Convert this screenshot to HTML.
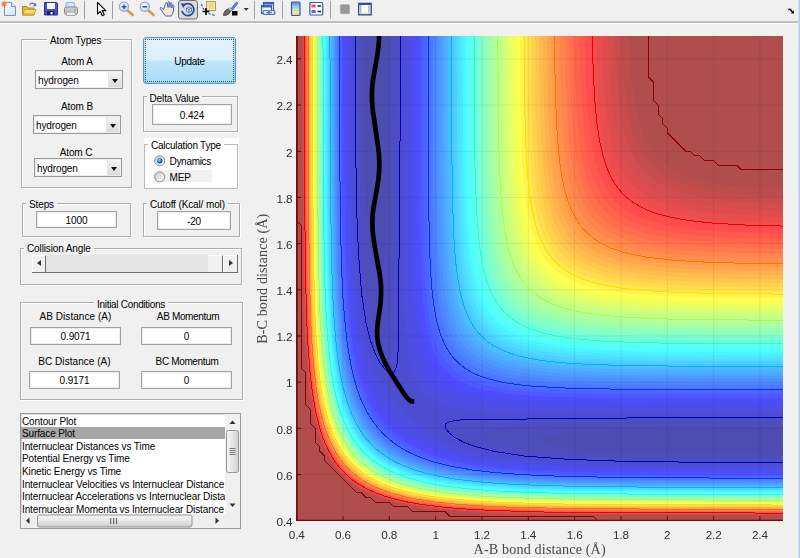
<!DOCTYPE html>
<html><head><meta charset="utf-8"><title>LEPS GUI</title>
<style>
html,body{margin:0;padding:0}
body{width:800px;height:558px;overflow:hidden;background:#f0f0f0;position:relative;font-family:"Liberation Sans",sans-serif;font-size:10px;letter-spacing:-0.12px;color:#000}
.abs,.gb,.ed,.lbl,.dd,.t{position:absolute;box-sizing:border-box}
.plot{position:absolute;left:0;top:0}
.tb{position:absolute;left:0;top:0;width:800px;height:21px;background:#f0f0f0}
.tbl1{position:absolute;left:0;top:21px;width:798px;height:1px;background:#c3c3c3}
.tbl2{position:absolute;left:0;top:22px;width:798px;height:1px;background:#b9b9b9}
.tbl3{position:absolute;left:0;top:23px;width:800px;height:1px;background:#fbfbfb}
.sep{position:absolute;top:1px;width:1px;height:18px;background:#a0a0a0}
.gb{border:1px solid #adadad;box-shadow:1px 1px 0 #fff, inset 1px 1px 0 #fff}
.t{background:#f0f0f0;padding:0 3px;white-space:nowrap;height:13px;line-height:13px}
.lbl{white-space:nowrap;text-align:center;height:13px;line-height:13px}
.ed{padding-top:1px;background:#fff;border:1px solid #a2a2a2;box-shadow:inset 0 0 0 1px #ececec;text-align:center;white-space:nowrap}
.dd{background:#fff;border:1px solid #9a9a9a;box-shadow:inset 0 0 0 1px #ececec;white-space:nowrap;height:19px;width:88px;line-height:20px;padding-left:2px;overflow:hidden}
.dd i{position:absolute;right:1px;top:1px;width:12px;height:15px;background:linear-gradient(#f4f4f4,#dadada);border-left:1px solid #e6e6e6}
.dd i:after{content:"";position:absolute;left:2.5px;top:6.5px;border:3.5px solid transparent;border-top:4px solid #111;border-bottom:0}
</style></head><body>
<svg class="plot" width="800" height="558" viewBox="0 0 800 558">
<defs><clipPath id="cp"><rect x="296" y="36" width="487" height="485"/></clipPath></defs><!-- 296.7 35.8 486.4 484.9 -->
<rect x="296.7" y="35.8" width="486.4" height="484.9" fill="#fff"/>
<g clip-path="url(#cp)" shape-rendering="geometricPrecision">
<rect x="296.7" y="35.8" width="486.4" height="484.9" fill="#4d4db1"/>
<path fill="#4d4dbc" d="M296.6 520.7L783.1 520.8L783.1 454.3L676.6 453.2L634.9 452.3L607.1 451.2L583.9 449.4L558.9 446.8L541.0 442.2L541.0 437.6L551.5 435.4L568.5 433.0L607.1 431.0L676.6 429.3L783.1 428.3L783.2 35.8L389.4 35.8L388.0 160.5L387.0 202.1L385.4 239.0L384.7 249.7L383.7 257.5L380.1 277.1L375.5 277.1L370.8 259.4L368.3 234.4L366.2 208.1L364.3 137.4L363.3 35.8L296.7 35.7L296.6 520.7Z"/>
<path fill="#4d4dc7" d="M296.6 520.7L783.1 520.8L783.1 459.1L648.8 457.9L597.8 456.6L570.0 455.2L529.3 451.4L504.7 446.8L491.0 442.2L484.0 437.6L484.1 433.0L491.3 430.2L495.9 429.0L509.8 427.2L533.0 425.7L570.0 424.3L616.3 423.4L783.1 422.2L783.2 35.8L395.5 35.8L394.3 202.1L393.4 248.2L391.9 285.2L390.4 308.3L388.7 322.1L387.5 326.7L384.7 333.9L380.1 333.9L375.5 327.0L370.8 313.3L366.2 288.8L362.4 248.2L361.0 220.5L359.7 169.7L358.5 35.8L296.7 35.7L296.6 520.7Z"/>
<path fill="#4d4dd2" d="M296.6 520.7L783.1 520.8L783.1 462.6L676.6 462.1L607.1 460.9L565.4 459.2L523.8 456.0L493.6 451.4L475.5 446.8L463.2 442.2L454.6 437.6L448.5 433.0L444.8 428.3L444.6 423.7L449.6 421.2L454.2 420.2L468.1 419.3L653.4 417.7L783.1 417.1L783.2 35.8L400.6 35.8L400.0 165.1L398.4 349.8L397.5 363.7L396.5 368.3L394.0 373.3L389.3 373.0L384.7 369.3L380.1 363.3L375.5 354.7L370.8 342.4L366.2 324.4L361.6 294.3L358.4 252.9L356.6 211.3L355.5 142.0L355.0 35.8L296.7 35.7L296.6 520.7Z"/>
<path fill="#4d4dde" d="M296.6 520.7L783.1 520.8L783.1 465.6L681.2 465.2L607.1 464.0L551.5 461.8L532.6 460.7L514.4 458.8L493.2 456.0L486.6 454.8L471.0 451.4L456.0 446.8L444.8 442.2L436.1 437.6L429.0 433.0L417.5 423.7L407.8 414.5L394.0 400.3L384.7 388.8L380.1 381.7L375.5 373.0L370.8 361.9L366.2 346.9L361.6 324.8L356.9 285.5L355.3 257.5L354.1 229.8L352.5 151.3L351.9 35.8L296.7 35.7L296.6 520.7ZM465.5 409.9L477.4 411.3L491.3 412.2L533.0 413.4L783.1 412.7L783.1 35.7L405.1 35.8L404.3 243.6L404.4 289.8L404.9 312.9L405.8 331.4L407.0 345.2L408.9 359.1L412.1 372.9L415.6 382.2L418.2 386.8L421.5 391.4L426.1 396.0L432.8 400.6L440.3 404.1L449.6 407.0L465.5 409.9Z"/>
<path fill="#4d4de9" d="M296.6 520.7L783.1 520.8L783.1 468.0L662.7 467.4L588.5 466.2L546.8 464.5L523.7 462.8L500.9 460.7L472.7 456.0L454.7 451.4L441.7 446.8L431.5 442.2L423.3 437.6L416.3 433.0L404.8 423.7L394.0 412.9L384.7 401.5L380.1 394.5L375.5 386.3L370.8 376.1L366.2 363.2L361.6 345.2L357.0 317.5L353.4 275.9L352.3 257.6L351.4 229.8L350.1 155.9L349.5 35.8L296.7 35.7L296.6 520.7ZM481.3 405.2L495.9 406.8L509.8 407.7L551.5 408.9L607.1 409.1L783.1 408.6L783.1 35.7L409.1 35.8L408.7 220.5L409.0 275.9L409.6 299.0L410.6 317.5L412.4 336.0L414.6 349.8L418.4 363.7L422.2 372.9L424.8 377.5L428.1 382.2L431.0 385.5L435.7 389.7L440.3 393.0L444.9 395.5L454.2 399.4L468.1 403.1L481.3 405.2Z"/>
<path fill="#4d4df4" d="M296.6 520.7L783.1 520.8L783.1 470.3L671.1 469.9L602.4 468.9L542.2 466.7L519.1 465.3L505.2 463.9L482.0 461.0L472.7 459.3L457.6 456.0L442.2 451.4L430.6 446.8L421.3 442.2L412.5 436.8L401.4 428.3L394.0 421.3L384.7 410.6L380.1 404.1L375.5 396.5L370.8 387.2L366.2 375.6L361.6 360.3L357.4 340.6L356.0 331.4L353.7 312.9L352.0 294.4L350.4 266.7L349.2 234.4L347.7 151.3L347.2 35.8L296.7 35.7L296.6 520.7ZM487.8 400.6L500.5 402.2L519.1 403.5L560.7 404.8L621.0 405.1L783.1 404.8L783.1 35.7L412.9 35.8L412.7 206.7L413.1 266.7L413.8 289.8L414.8 308.3L416.7 326.7L418.9 340.6L422.4 354.4L426.4 364.6L431.1 372.9L435.7 378.7L440.3 383.2L444.9 386.7L449.6 389.5L458.8 393.8L472.7 397.9L487.8 400.6Z"/>
<path fill="#4d4dff" d="M296.6 520.7L783.1 520.8L783.1 472.2L662.7 471.7L583.9 470.6L537.6 468.7L494.2 465.3L463.5 460.4L445.7 456.0L432.1 451.4L421.6 446.8L413.1 442.2L403.2 435.5L394.6 428.3L385.8 419.1L378.9 409.9L375.5 404.6L370.8 396.2L366.2 385.7L361.6 372.2L357.2 354.4L352.3 323.8L348.8 280.6L347.0 234.4L345.8 155.9L345.3 35.8L296.7 35.7L296.6 520.7ZM551.5 400.6L616.3 401.4L783.1 401.2L783.1 35.7L416.5 35.8L416.4 211.3L416.7 248.2L417.6 280.6L418.9 303.6L420.9 322.1L424.3 340.6L428.7 354.4L433.1 363.7L436.0 368.3L440.3 373.7L444.9 378.2L450.1 382.2L458.2 386.8L463.5 389.1L477.4 393.5L495.9 396.9L519.1 399.2L551.5 400.6Z"/>
<path fill="#4d58ff" d="M296.6 520.7L783.1 520.8L783.1 474.1L662.7 473.6L588.5 472.6L533.0 470.6L519.1 469.7L495.9 467.6L476.6 465.3L463.5 462.9L452.3 460.7L435.9 456.0L423.8 451.4L414.2 446.8L406.3 442.2L399.7 437.6L394.0 433.0L384.7 423.7L380.1 418.0L375.5 411.4L371.8 405.2L366.2 394.0L361.6 381.9L356.9 365.5L353.8 349.8L351.6 336.0L347.7 296.9L346.3 271.3L345.2 239.0L343.9 160.5L343.4 35.8L296.7 35.7L296.6 520.7ZM533.3 396.0L560.7 397.1L602.4 397.8L783.1 397.8L783.1 35.7L420.0 35.8L419.9 197.4L420.8 262.1L422.1 289.8L423.6 308.3L426.3 326.7L429.6 340.6L432.8 349.8L434.8 354.4L440.3 363.9L443.7 368.3L448.2 372.9L454.0 377.5L458.8 380.6L463.5 383.0L472.7 386.8L486.6 390.5L505.2 393.6L533.3 396.0Z"/>
<path fill="#4d63ff" d="M296.6 520.7L783.1 520.8L783.1 475.8L667.3 475.4L591.7 474.5L537.6 472.6L495.9 469.8L462.9 465.3L442.3 460.7L427.8 456.0L416.7 451.4L407.8 446.8L398.6 440.8L389.3 433.2L380.4 423.7L373.7 414.5L370.8 409.9L366.2 401.1L361.6 390.0L356.9 375.5L353.1 359.1L350.8 345.2L348.3 326.7L346.6 308.3L345.2 285.2L343.0 226.6L342.2 151.3L341.8 35.8L296.7 35.7L296.6 520.7ZM523.0 391.4L556.1 393.3L597.8 394.3L783.1 394.5L783.1 35.7L423.3 35.8L423.3 188.2L424.3 257.5L425.3 280.6L427.2 303.6L430.0 322.1L433.3 336.0L435.7 343.2L438.4 349.8L440.8 354.4L444.9 360.8L449.6 366.3L454.2 370.7L458.8 374.1L463.5 377.0L472.7 381.4L486.6 385.8L505.2 389.4L523.0 391.4Z"/>
<path fill="#4d6eff" d="M296.6 520.7L783.1 520.8L783.1 477.3L658.0 476.9L579.3 475.8L533.0 474.2L509.8 472.7L486.6 470.6L472.7 468.9L452.0 465.3L431.0 459.7L420.8 456.0L410.6 451.4L402.4 446.8L395.6 442.2L389.3 437.2L380.4 428.3L373.3 419.1L366.2 407.1L361.6 397.0L356.9 383.9L352.8 368.3L350.2 354.4L347.7 338.0L345.6 317.5L343.9 294.4L342.9 275.9L341.9 243.6L340.7 165.1L340.2 35.8L296.7 35.7L296.6 520.7ZM516.0 386.8L528.3 388.1L546.8 389.4L593.2 390.8L653.4 391.2L783.1 391.2L783.1 35.7L426.6 35.8L426.6 183.6L427.5 248.2L428.7 275.9L430.2 294.4L432.6 312.9L435.4 326.7L439.8 340.6L444.9 351.3L450.3 359.1L454.5 363.7L459.8 368.3L468.1 373.7L476.1 377.5L482.0 379.7L495.9 383.5L516.0 386.8Z"/>
<path fill="#4d79ff" d="M296.6 520.7L783.1 520.8L783.1 478.9L662.7 478.5L588.5 477.5L528.3 475.6L510.1 474.5L491.3 472.8L468.1 470.1L458.8 468.5L442.8 465.3L426.6 460.7L414.7 456.0L405.2 451.4L394.0 444.3L385.7 437.6L376.9 428.3L370.8 420.2L366.2 412.5L360.5 400.6L356.9 391.2L352.3 375.1L347.7 351.3L345.7 336.0L343.8 317.5L342.5 299.0L340.2 239.0L339.1 160.5L338.7 35.8L296.7 35.7L296.6 520.7ZM567.1 386.8L597.8 387.6L634.9 388.0L783.1 388.1L783.1 35.7L429.7 35.8L429.9 188.2L430.4 229.8L431.3 257.5L433.0 285.2L435.1 303.6L438.7 322.1L443.0 336.0L444.9 340.7L449.6 349.4L453.1 354.4L457.1 359.1L462.1 363.7L468.1 368.0L472.7 370.7L482.0 374.9L495.9 379.2L514.4 382.7L537.6 385.2L567.1 386.8Z"/>
<path fill="#4d84ff" d="M296.6 520.7L783.1 520.8L783.1 480.2L667.3 479.9L592.0 479.1L537.6 477.5L490.6 474.5L472.7 472.4L455.7 469.9L435.7 465.5L426.4 462.7L420.3 460.7L412.5 457.5L403.2 452.9L393.2 446.8L384.7 440.0L377.6 433.0L370.3 423.7L366.2 417.3L362.2 409.9L356.9 397.5L352.3 383.0L348.9 368.3L346.4 354.4L344.0 336.0L342.2 317.5L340.7 294.4L338.6 234.4L337.7 160.5L337.3 35.8L296.7 35.7L296.6 520.7ZM544.5 382.2L574.6 383.7L616.3 384.6L783.1 385.0L783.1 35.7L432.9 35.8L433.0 179.0L433.5 220.5L434.3 248.2L435.8 275.9L437.7 294.4L440.7 312.9L444.3 326.7L449.6 339.7L452.6 345.2L455.7 349.8L459.5 354.4L464.3 359.1L470.3 363.7L477.4 367.9L482.0 370.0L491.3 373.5L505.2 377.1L523.7 380.2L544.5 382.2Z"/>
<path fill="#4d8fff" d="M296.6 520.7L783.1 520.8L783.1 481.5L653.4 481.1L574.6 480.1L528.3 478.5L505.2 477.1L482.0 475.2L468.1 473.5L449.6 470.5L440.3 468.4L426.4 464.8L414.7 460.7L404.4 456.0L394.0 450.0L389.3 446.8L383.6 442.2L375.5 434.0L370.8 428.4L367.6 423.7L361.6 413.3L356.9 403.1L352.3 389.8L348.0 372.9L345.5 359.1L343.0 342.0L341.1 322.1L339.5 299.0L338.4 277.3L337.5 248.2L336.5 169.7L336.0 35.8L296.7 35.7L296.6 520.7ZM532.3 377.5L546.8 378.9L565.4 380.0L607.1 381.3L667.3 381.8L783.1 381.9L783.1 35.7L435.9 35.8L436.1 174.3L437.2 239.0L438.3 262.1L440.2 285.2L442.9 303.6L445.9 317.5L450.6 331.4L455.2 340.6L458.8 346.1L463.5 351.6L468.1 356.1L472.7 359.7L482.0 365.1L489.3 368.3L495.9 370.6L505.2 373.1L514.4 375.0L532.3 377.5Z"/>
<path fill="#4d9bff" d="M296.6 520.7L783.1 520.8L783.1 482.8L658.0 482.4L579.3 481.5L519.1 479.5L482.0 476.6L464.1 474.5L449.6 472.1L438.8 469.9L421.9 465.3L409.6 460.7L400.0 456.0L389.3 449.4L380.4 442.2L371.7 433.0L366.2 425.4L361.6 417.7L355.8 405.2L352.3 395.9L347.7 379.1L343.1 354.4L341.4 340.6L338.3 303.6L336.2 243.6L335.1 165.1L334.7 35.8L296.7 35.7L296.6 520.7ZM583.6 377.5L648.8 378.7L783.1 378.9L783.1 35.7L439.0 35.8L439.2 179.0L439.8 215.9L440.9 248.2L442.8 275.9L445.1 294.4L448.8 312.9L453.4 326.7L457.8 336.0L460.6 340.6L464.0 345.2L468.1 349.7L472.7 353.9L477.4 357.3L482.0 360.1L491.3 364.5L500.5 367.8L509.8 370.2L528.3 373.5L551.5 375.9L583.6 377.5Z"/>
<path fill="#4da6ff" d="M296.6 520.7L783.1 520.8L783.1 484.0L662.7 483.7L583.9 482.8L528.3 481.2L505.2 479.9L486.6 478.5L463.5 475.8L449.6 473.7L431.9 469.9L417.1 465.5L405.1 460.7L396.1 456.0L388.7 451.4L380.1 444.6L373.0 437.6L365.8 428.3L361.6 421.6L357.8 414.5L352.3 401.2L347.7 385.9L344.8 372.9L343.0 363.6L340.0 340.6L338.4 324.3L336.8 299.0L334.8 239.0L333.8 160.5L333.5 35.8L296.7 35.7L296.6 520.7ZM556.8 372.9L588.5 374.5L630.2 375.4L783.1 375.9L783.1 35.7L442.0 35.8L442.2 169.7L442.7 206.7L443.7 239.0L445.4 266.7L447.3 285.2L450.5 303.6L454.3 317.5L458.0 326.7L460.3 331.4L466.2 340.6L470.1 345.2L475.0 349.8L481.2 354.4L486.6 357.6L491.3 359.9L500.5 363.5L514.4 367.3L533.0 370.5L556.8 372.9Z"/>
<path fill="#4db1ff" d="M296.6 520.7L783.1 520.8L783.1 485.1L648.8 484.7L570.0 483.8L519.1 482.0L479.2 479.1L463.5 477.2L445.9 474.5L426.4 470.1L417.1 467.2L407.9 463.7L398.6 459.5L389.3 454.1L379.6 446.8L370.8 438.0L363.5 428.3L356.9 416.8L352.3 406.1L347.7 392.0L343.2 372.9L341.0 359.1L338.6 340.6L335.6 299.0L333.7 248.2L332.8 169.7L332.4 35.8L296.7 35.7L296.6 520.7ZM543.1 368.3L574.6 370.8L616.3 372.2L676.6 372.8L783.1 372.9L783.1 35.7L445.0 35.8L445.2 165.1L446.5 229.8L447.6 252.9L449.7 275.9L452.4 294.4L455.6 308.3L460.5 322.1L465.3 331.4L468.3 336.0L472.7 341.4L477.4 345.9L482.3 349.8L491.3 355.2L500.0 359.1L505.2 360.9L514.4 363.5L523.7 365.5L543.1 368.3Z"/>
<path fill="#4dbcff" d="M296.6 520.7L783.1 520.8L783.1 486.2L653.4 485.9L574.6 485.0L523.7 483.4L500.5 482.1L477.4 480.2L458.8 477.9L440.3 474.8L426.4 471.5L417.1 468.8L407.2 465.3L397.1 460.7L389.0 456.0L382.5 451.4L376.9 446.8L368.1 437.6L361.6 428.6L356.9 420.6L352.3 410.5L347.7 397.4L343.7 382.2L341.1 368.3L338.3 349.8L336.1 326.7L334.6 303.6L332.7 252.9L331.7 169.7L331.3 35.8L296.7 35.7L296.6 520.7ZM589.5 368.3L653.4 369.6L783.1 370.0L783.1 35.7L447.9 35.8L448.3 169.7L448.9 206.7L450.0 239.0L452.1 266.7L454.4 285.2L458.3 303.6L463.0 317.5L467.5 326.7L470.4 331.4L477.4 339.8L482.0 344.0L486.6 347.5L491.3 350.4L500.5 354.9L514.4 359.6L523.7 361.8L534.5 363.7L560.7 366.6L589.5 368.3Z"/>
<path fill="#4dc7ff" d="M296.6 520.7L783.1 520.8L783.1 487.3L653.4 486.9L574.6 486.0L514.4 484.1L477.4 481.4L457.7 479.1L444.9 477.0L432.2 474.5L415.4 469.9L403.1 465.3L393.6 460.7L384.7 455.2L379.6 451.4L374.3 446.8L366.2 438.0L359.4 428.3L356.7 423.7L352.3 414.6L348.7 405.2L345.8 396.0L342.3 382.2L338.4 360.2L336.6 345.2L333.6 308.3L331.6 248.2L330.6 169.7L330.2 35.8L296.7 35.7L296.6 520.7ZM564.6 363.7L593.2 365.3L634.9 366.4L690.5 366.9L783.1 367.0L783.1 35.7L450.9 35.8L451.2 165.1L451.8 202.1L452.7 229.8L454.2 253.7L456.6 275.9L459.9 294.4L463.8 308.3L467.5 317.5L469.8 322.1L475.8 331.4L479.8 336.0L484.7 340.6L491.0 345.2L495.9 348.1L500.5 350.4L509.8 354.1L523.7 358.0L542.2 361.3L564.6 363.7Z"/>
<path fill="#4dd2ff" d="M296.6 520.7L783.1 520.8L783.1 488.4L653.4 488.0L574.6 487.1L519.1 485.4L491.3 483.8L477.4 482.6L454.2 479.8L440.3 477.5L426.4 474.5L410.9 469.9L399.4 465.3L390.4 460.7L380.1 453.8L371.9 446.8L363.8 437.6L357.5 428.3L352.3 418.3L347.7 406.8L343.0 391.4L340.1 377.5L337.7 363.7L335.4 345.2L333.8 327.6L332.3 303.6L330.4 243.6L329.5 165.1L329.1 35.8L296.7 35.7L296.6 520.7ZM655.5 363.7L783.1 364.1L783.2 35.8L453.8 35.8L454.4 179.0L455.3 215.9L457.0 248.2L459.4 271.3L461.6 285.2L463.5 293.5L468.1 308.6L472.1 317.5L474.7 322.1L477.8 326.7L481.5 331.4L486.1 336.0L491.3 340.2L495.9 343.3L500.5 345.9L509.8 350.0L519.1 353.0L528.3 355.3L537.6 357.1L551.2 359.1L574.6 361.2L607.1 362.7L655.5 363.7Z"/>
<path fill="#4ddeff" d="M296.6 520.7L783.1 520.8L783.1 489.3L653.4 489.0L579.3 488.3L523.7 486.7L500.5 485.5L477.2 483.8L458.8 481.6L440.3 478.8L421.3 474.5L407.9 470.3L395.9 465.3L387.4 460.7L380.1 455.9L370.8 448.0L366.2 443.1L361.7 437.6L356.9 430.3L352.3 421.8L347.3 409.9L343.0 396.5L338.7 377.5L335.9 359.1L333.8 340.7L332.0 317.5L330.8 294.4L329.2 239.0L328.5 165.1L328.2 35.8L296.7 35.7L296.6 520.7ZM592.4 359.1L621.0 360.1L658.0 360.7L783.1 361.1L783.1 35.7L456.8 35.8L457.2 165.1L457.9 202.1L459.3 234.4L461.1 257.5L463.6 275.9L467.5 294.4L472.3 308.3L476.8 317.5L479.8 322.1L483.3 326.7L487.5 331.4L495.9 338.2L500.5 341.1L509.8 345.7L523.7 350.4L542.2 354.4L565.4 357.2L592.4 359.1Z"/>
<path fill="#4de9ff" d="M296.6 520.7L783.1 520.8L783.1 490.2L644.1 489.9L565.4 489.0L514.4 487.3L491.3 485.9L468.1 483.9L449.6 481.5L435.6 479.1L417.1 474.7L407.9 471.7L403.0 469.9L394.0 465.9L384.7 460.8L377.9 456.0L370.8 450.1L363.5 442.2L356.9 433.2L352.3 425.0L347.6 414.5L343.0 401.2L338.4 382.2L333.8 351.4L332.0 331.4L330.5 308.3L328.6 257.5L327.6 174.3L327.2 35.8L296.7 35.7L296.6 520.7ZM570.8 354.4L602.4 356.4L639.5 357.5L695.1 358.0L783.1 358.2L783.1 35.7L459.7 35.8L460.2 160.5L460.9 197.4L461.9 225.1L463.5 248.2L465.6 266.7L469.0 285.2L473.0 299.0L476.7 308.3L479.0 312.9L485.1 322.1L489.1 326.7L494.0 331.4L500.2 336.0L505.2 338.9L509.8 341.3L519.1 345.0L533.0 348.9L551.5 352.3L570.8 354.4Z"/>
<path fill="#4df4ff" d="M296.6 520.7L783.1 520.8L783.1 491.2L648.8 490.8L570.0 490.0L515.1 488.4L472.7 485.4L457.4 483.8L440.3 481.1L429.9 479.1L412.2 474.5L399.5 469.9L389.3 465.1L380.1 459.4L375.4 456.0L370.1 451.4L361.6 442.2L356.9 435.8L352.3 428.0L346.2 414.5L342.9 405.2L338.4 387.9L334.9 368.3L332.6 349.8L330.6 326.7L329.2 303.6L327.6 252.9L326.7 174.3L326.3 35.8L296.7 35.7L296.6 520.7ZM639.2 354.4L695.1 355.1L783.1 355.3L783.2 35.8L462.6 35.8L463.2 165.1L464.1 202.1L465.7 234.4L468.1 259.6L471.7 280.6L475.5 294.4L479.0 303.6L482.0 309.6L486.6 317.0L490.7 322.1L495.3 326.7L500.5 331.0L508.4 336.0L514.4 338.9L528.3 343.9L537.6 346.3L546.8 348.1L570.0 351.1L597.8 353.1L639.2 354.4Z"/>
<path fill="#4dffff" d="M296.6 520.7L783.1 520.8L783.1 492.1L648.8 491.8L570.0 490.9L509.8 489.0L472.7 486.4L449.6 483.8L435.7 481.4L424.7 479.1L408.2 474.5L396.2 469.9L386.9 465.3L380.1 461.1L375.5 457.8L368.0 451.4L359.8 442.2L353.6 433.0L347.7 421.5L343.1 409.9L338.4 393.1L336.1 382.2L333.8 368.4L331.6 349.8L328.7 312.9L326.7 252.9L325.8 174.3L325.4 35.8L296.7 35.7L296.6 520.7ZM595.8 349.8L625.6 351.1L662.7 351.8L783.1 352.3L783.1 35.7L465.6 35.8L466.2 160.5L467.0 197.4L468.3 225.1L470.1 248.2L472.7 267.4L476.6 285.2L481.4 299.0L486.0 308.3L488.9 312.9L495.9 321.3L500.5 325.6L505.2 329.1L509.8 332.0L517.7 336.0L523.7 338.4L533.0 341.3L550.8 345.2L570.0 347.8L595.8 349.8Z"/>
<path fill="#58fff4" d="M296.6 520.7L783.1 520.8L783.1 493.0L653.4 492.7L574.6 491.9L514.4 490.1L491.3 488.9L472.7 487.4L449.6 484.8L435.7 482.5L419.9 479.1L404.5 474.5L393.1 469.9L384.2 465.3L375.5 459.5L366.2 451.6L358.1 442.2L352.3 433.5L347.7 424.6L343.0 413.2L338.4 397.9L335.0 382.2L332.8 368.3L330.1 345.2L328.6 326.7L327.3 303.6L325.6 243.6L324.8 165.1L324.5 35.8L296.7 35.7L296.6 520.7ZM577.2 345.2L607.1 347.3L644.1 348.5L699.7 349.2L783.1 349.4L783.1 35.7L468.6 35.8L469.1 151.3L469.8 188.2L470.9 215.9L472.5 239.0L474.7 257.5L478.1 275.9L482.1 289.8L485.8 299.0L488.2 303.6L494.2 312.9L498.2 317.5L503.1 322.1L509.3 326.7L514.4 329.8L519.1 332.2L528.3 335.9L542.2 339.9L556.1 342.6L577.2 345.2Z"/>
<path fill="#63ffe9" d="M296.6 520.7L783.1 520.8L783.1 493.8L653.4 493.5L574.6 492.8L519.1 491.2L495.9 490.1L472.0 488.4L454.2 486.4L435.7 483.6L417.1 479.5L403.2 475.3L390.2 469.9L381.7 465.3L374.8 460.7L366.2 453.4L360.0 446.8L356.4 442.2L352.3 436.0L347.7 427.5L342.3 414.5L338.0 400.6L333.9 382.2L331.2 363.7L329.1 345.9L327.4 322.1L326.2 299.0L324.7 243.6L323.9 165.1L323.7 35.8L296.7 35.7L296.6 520.7ZM635.4 345.2L690.5 346.1L783.1 346.4L783.2 35.8L471.5 35.8L472.2 160.5L473.2 197.4L474.7 225.1L477.4 252.0L480.8 271.3L484.6 285.2L486.6 290.7L490.4 299.0L496.1 308.3L500.5 313.6L505.2 318.2L510.1 322.1L517.5 326.7L523.7 329.8L533.0 333.4L542.2 336.1L551.5 338.2L574.6 341.6L602.4 343.9L635.4 345.2Z"/>
<path fill="#6effde" d="M296.6 520.7L783.1 520.8L783.1 494.6L644.1 494.3L565.4 493.5L509.8 491.7L468.1 488.9L449.6 486.7L431.0 483.8L417.1 480.6L407.9 478.0L397.8 474.5L384.7 468.4L375.5 462.7L366.2 455.2L358.4 446.8L352.3 438.3L347.7 430.2L342.7 419.1L338.1 405.2L333.8 386.9L331.4 372.9L329.1 355.3L327.4 336.0L326.0 312.9L324.1 257.5L323.2 174.3L322.9 35.8L296.7 35.7L296.6 520.7ZM601.3 340.6L630.2 342.0L667.3 342.8L783.1 343.4L783.1 35.7L474.5 35.8L475.1 151.3L476.0 188.2L477.3 215.9L479.2 239.0L482.0 259.1L485.8 275.9L490.6 289.8L495.2 299.0L498.1 303.6L505.2 312.2L509.8 316.4L514.4 319.9L519.1 322.8L526.8 326.7L539.3 331.4L556.1 335.4L574.6 338.2L601.3 340.6Z"/>
<path fill="#79ffd2" d="M296.6 520.7L783.1 520.8L783.1 495.4L644.1 495.1L565.4 494.3L514.4 492.9L491.3 491.6L468.1 489.8L454.2 488.3L435.7 485.6L425.8 483.8L407.7 479.1L394.8 474.5L384.7 469.8L375.5 464.2L370.6 460.7L365.3 456.0L356.9 447.0L352.3 440.6L347.7 432.8L341.6 419.1L338.3 409.9L333.8 392.0L330.5 372.9L328.2 354.4L326.2 331.4L324.9 308.3L323.3 257.5L322.4 174.3L322.1 35.8L296.7 35.7L296.6 520.7ZM584.9 336.0L616.3 338.2L653.4 339.5L704.3 340.1L783.1 340.4L783.1 35.7L477.6 35.8L478.1 146.6L478.8 179.0L480.0 206.7L481.6 229.8L483.8 248.2L487.3 266.7L491.3 280.6L495.1 289.8L497.4 294.4L503.5 303.6L507.5 308.3L512.4 312.9L518.5 317.5L523.7 320.6L528.3 323.0L537.6 326.7L551.5 330.7L565.4 333.4L584.9 336.0Z"/>
<path fill="#84ffc7" d="M296.6 520.7L783.1 520.8L783.1 496.2L644.1 495.9L565.4 495.0L505.2 493.3L468.1 490.6L447.3 488.4L431.0 485.7L421.2 483.8L404.3 479.1L392.0 474.5L382.5 469.9L374.9 465.3L368.7 460.7L363.5 456.0L355.3 446.8L349.1 437.6L343.0 425.7L338.7 414.5L333.8 396.6L331.8 386.8L329.1 370.5L327.3 354.4L324.5 317.5L322.5 257.5L321.6 174.3L321.3 35.8L296.7 35.7L296.6 520.7ZM639.1 336.0L695.1 337.0L783.1 337.4L783.2 35.8L480.6 35.8L481.3 151.3L482.3 188.2L483.8 215.9L486.6 243.3L490.0 262.1L493.9 275.9L495.9 281.5L499.7 289.8L505.4 299.0L509.8 304.3L514.4 308.9L519.5 312.9L526.8 317.5L533.0 320.5L542.2 324.1L551.5 326.9L560.7 329.0L579.3 331.9L607.1 334.5L639.1 336.0Z"/>
<path fill="#8fffbc" d="M296.6 520.7L783.1 520.8L783.1 497.0L648.8 496.7L570.0 495.9L509.8 494.2L486.0 493.0L468.1 491.5L444.9 488.9L431.0 486.6L417.0 483.8L401.0 479.1L389.2 474.5L380.1 469.9L370.8 463.8L361.8 456.0L353.8 446.8L347.7 437.6L343.0 428.4L338.4 416.7L333.8 400.8L330.9 386.8L328.6 372.9L326.4 354.4L324.5 332.0L323.5 312.9L321.6 252.9L320.8 174.3L320.5 35.8L296.7 35.7L296.6 520.7ZM609.6 331.4L634.9 332.6L671.9 333.6L783.1 334.3L783.1 35.7L483.7 35.8L484.4 146.6L485.2 179.0L486.5 206.7L488.4 229.8L491.3 249.8L495.1 266.7L499.9 280.6L505.2 290.8L509.8 297.5L514.4 302.7L519.1 307.0L523.7 310.5L528.3 313.5L536.2 317.5L548.8 322.1L565.4 326.2L583.9 329.0L609.6 331.4Z"/>
<path fill="#9bffb1" d="M296.6 520.7L783.1 520.8L783.1 497.8L653.4 497.5L570.0 496.7L509.8 495.0L468.1 492.4L449.6 490.4L431.0 487.6L413.0 483.8L398.6 479.4L386.7 474.5L378.0 469.9L370.8 465.2L361.6 457.4L356.9 452.5L352.3 446.8L347.7 439.7L343.0 430.9L338.2 419.1L333.8 404.7L329.9 386.8L327.7 372.9L325.6 354.4L324.0 336.0L322.7 312.9L320.8 252.9L320.0 169.7L319.7 35.8L296.7 35.7L296.6 520.7ZM594.5 326.7L621.0 328.7L658.0 330.2L709.0 330.9L783.1 331.2L783.1 35.7L486.8 35.8L487.4 142.0L488.2 174.3L489.5 202.1L491.4 225.1L493.9 243.6L496.6 257.5L500.7 271.3L504.5 280.6L506.9 285.2L513.0 294.4L517.0 299.0L522.0 303.6L528.2 308.3L533.0 311.1L537.6 313.5L546.8 317.3L560.7 321.4L574.6 324.1L594.5 326.7Z"/>
<path fill="#a6ffa6" d="M296.6 520.7L783.1 520.8L783.1 498.5L648.8 498.2L570.0 497.5L509.8 495.8L465.4 493.0L444.9 490.6L430.1 488.4L412.5 484.5L398.6 480.4L384.7 474.7L375.9 469.9L369.1 465.3L361.6 458.9L354.6 451.4L347.9 442.2L343.0 433.4L338.4 422.7L333.8 408.4L329.9 391.4L326.9 372.9L324.7 354.4L322.9 331.4L321.7 308.3L320.0 248.2L319.3 169.7L319.0 35.8L296.7 35.7L296.6 520.7ZM650.3 326.7L704.3 327.7L783.1 328.1L783.2 35.8L489.9 35.8L490.2 105.1L490.8 151.3L491.8 183.6L493.6 211.3L496.1 234.4L499.5 252.9L503.4 266.7L507.0 275.9L509.8 281.5L514.4 288.9L518.9 294.4L523.5 299.0L528.3 303.0L537.6 308.8L546.6 312.9L551.5 314.7L560.7 317.4L570.0 319.5L588.5 322.5L616.3 325.1L650.3 326.7Z"/>
<path fill="#b1ff9b" d="M296.7 520.7L783.1 520.7L783.1 499.2L644.1 498.9L560.7 498.0L505.2 496.3L463.5 493.6L444.9 491.5L426.4 488.6L412.5 485.5L403.2 482.9L392.3 479.1L380.1 473.5L370.8 467.8L361.6 460.5L356.9 455.9L349.7 446.8L344.1 437.6L339.6 428.3L336.1 419.1L333.2 409.9L329.1 392.4L327.4 382.2L324.5 360.6L322.8 340.6L321.1 312.9L319.9 278.6L318.7 192.8L318.3 35.8L296.7 35.8L296.7 520.7ZM621.7 322.1L648.8 323.4L681.2 324.2L783.1 325.0L783.1 35.8L493.0 35.8L493.9 142.0L494.8 174.3L496.3 202.1L498.5 225.1L501.4 243.6L505.2 259.1L509.8 271.8L514.3 280.6L517.3 285.2L520.9 289.8L525.2 294.4L533.0 300.8L537.6 303.8L546.4 308.3L560.7 313.4L579.2 317.5L597.8 320.1L621.7 322.1Z"/>
<path fill="#bcff8f" d="M296.7 520.7L783.1 520.7L783.1 499.8L644.1 499.5L560.7 498.7L509.8 497.3L486.6 496.1L463.5 494.3L444.9 492.3L426.4 489.4L417.1 487.5L402.7 483.8L389.7 479.1L379.8 474.5L370.8 469.1L365.5 465.3L360.2 460.7L352.3 452.1L347.7 445.7L343.0 437.9L338.4 428.0L333.8 415.0L331.1 405.2L329.0 396.0L325.8 377.5L323.6 359.1L321.4 331.4L319.9 303.6L319.1 275.9L318.0 188.2L317.6 35.8L296.7 35.8L296.7 520.7ZM607.0 317.5L634.9 319.5L671.9 320.8L718.2 321.5L783.1 321.8L783.1 35.8L496.2 35.8L497.0 137.4L497.9 169.7L499.4 197.4L501.5 220.5L504.3 239.0L507.5 252.9L512.3 266.7L516.8 275.9L519.6 280.6L523.7 286.0L527.1 289.8L532.1 294.4L537.6 298.5L542.2 301.3L546.8 303.7L556.1 307.6L570.0 311.7L588.5 315.3L607.0 317.5Z"/>
<path fill="#c7ff84" d="M296.7 520.7L783.1 520.7L783.1 500.5L644.1 500.2L560.7 499.4L500.5 497.7L463.5 495.1L443.8 493.0L426.4 490.2L416.9 488.4L399.7 483.8L387.3 479.1L377.7 474.5L370.8 470.4L366.2 467.0L358.7 460.7L352.3 453.7L347.2 446.8L343.0 439.9L337.5 428.3L333.8 418.0L330.2 405.2L327.3 391.4L325.0 377.5L322.4 354.4L320.6 331.4L319.4 308.3L318.4 275.9L317.3 188.2L316.9 35.8L296.7 35.8L296.7 520.7ZM672.4 317.5L718.2 318.2L783.1 318.5L783.1 35.8L499.5 35.8L499.8 100.5L500.5 146.6L501.7 179.0L503.7 206.7L506.6 229.8L510.4 248.2L515.0 262.1L519.1 270.9L522.0 275.9L525.2 280.6L529.1 285.2L533.8 289.8L542.2 296.1L547.3 299.0L556.1 303.1L570.0 307.6L588.5 311.5L611.7 314.4L639.5 316.3L672.4 317.5Z"/>
<path fill="#d2ff79" d="M296.7 520.7L783.1 520.7L783.1 501.2L644.1 500.9L565.4 500.2L505.2 498.5L486.3 497.6L463.5 495.8L440.3 493.3L426.4 491.0L412.5 488.2L396.9 483.8L384.9 479.1L375.5 474.4L366.2 468.3L357.2 460.7L352.3 455.3L346.0 446.8L340.7 437.6L336.6 428.3L333.2 419.1L329.3 405.2L324.5 379.7L322.1 359.1L319.9 331.7L317.7 275.9L316.6 188.2L316.2 35.8L296.7 35.8L296.7 520.7ZM639.8 312.9L695.1 314.6L783.1 315.3L783.1 35.8L502.8 35.8L503.7 137.4L504.7 169.7L506.4 197.4L509.0 220.5L512.3 239.0L516.1 252.9L519.1 260.6L521.9 266.7L524.5 271.3L528.3 276.9L533.0 282.4L537.6 286.9L542.2 290.5L548.3 294.4L556.1 298.4L560.7 300.3L574.6 304.6L593.2 308.4L616.3 311.2L639.8 312.9Z"/>
<path fill="#deff6e" d="M296.7 520.7L783.1 520.7L783.1 501.9L644.1 501.6L565.4 500.9L505.2 499.2L482.0 498.0L463.5 496.6L440.3 494.0L426.4 491.9L409.7 488.4L394.1 483.8L382.7 479.1L373.8 474.5L366.2 469.6L356.9 461.7L352.3 456.8L347.7 451.0L342.1 442.2L337.5 433.0L333.8 423.6L329.1 408.0L326.5 396.0L324.1 382.2L321.8 363.7L319.7 340.6L318.3 312.9L317.1 275.9L315.9 188.2L315.5 35.8L296.7 35.8L296.7 520.7ZM624.1 308.3L648.8 309.8L681.2 311.0L722.9 311.6L783.1 312.0L783.1 35.8L506.1 35.8L507.0 132.8L508.0 165.1L509.3 188.2L511.5 211.3L514.4 229.8L517.7 243.6L522.5 257.5L528.3 268.6L533.0 275.2L537.6 280.4L542.2 284.6L546.8 288.0L556.1 293.4L570.0 299.0L583.9 302.7L602.4 305.9L624.1 308.3Z"/>
<path fill="#e9ff63" d="M296.7 520.7L783.1 520.7L783.1 502.6L639.5 502.3L565.4 501.5L505.2 499.9L463.5 497.3L444.9 495.3L428.2 493.0L407.9 488.7L398.6 486.1L384.7 481.0L375.5 476.5L365.0 469.9L356.9 463.1L350.4 456.0L343.7 446.8L338.6 437.6L334.6 428.3L328.8 409.9L325.7 396.0L323.4 382.2L320.6 359.1L319.1 340.6L317.6 312.9L316.4 275.9L315.2 188.2L314.9 35.8L296.7 35.8L296.7 520.7ZM726.6 308.3L783.1 308.6L783.1 35.8L509.5 35.8L509.8 95.8L510.7 142.0L512.0 174.3L514.4 203.7L517.6 225.1L519.6 234.4L522.1 243.6L525.4 252.9L528.3 259.2L532.7 266.7L536.0 271.3L540.0 275.9L546.8 282.1L551.5 285.5L559.1 289.8L565.4 292.7L574.6 296.0L583.9 298.5L593.2 300.5L616.3 303.8L644.1 306.0L681.2 307.5L726.6 308.3Z"/>
<path fill="#f4ff58" d="M296.7 520.7L783.1 520.7L783.1 503.2L644.1 502.9L565.4 502.2L505.2 500.6L482.0 499.4L458.8 497.6L440.3 495.5L423.8 493.0L403.3 488.4L394.0 485.4L380.1 479.9L370.8 474.9L363.5 469.9L356.9 464.4L349.2 456.0L343.0 447.4L338.4 439.1L333.8 428.6L330.6 419.1L328.0 409.9L324.5 394.0L322.6 382.2L319.9 359.4L318.4 340.6L316.9 312.9L315.7 275.9L314.7 192.8L314.3 35.8L296.7 35.8L296.7 520.7ZM670.2 303.6L718.2 304.7L783.1 305.2L783.1 35.8L512.9 35.8L513.3 95.8L514.1 137.4L515.4 169.7L517.1 192.8L519.3 211.3L522.7 229.8L526.7 243.6L530.4 252.9L533.0 257.9L537.6 265.3L542.2 271.1L546.8 275.8L551.5 279.6L560.7 285.4L570.0 289.7L574.6 291.4L583.9 294.2L593.2 296.4L611.7 299.4L639.5 302.1L670.2 303.6Z"/>
<path fill="#ffff4d" d="M296.7 520.7L783.1 520.7L783.1 503.8L639.5 503.5L556.1 502.7L500.5 501.0L458.8 498.3L440.3 496.2L421.8 493.4L407.9 490.3L398.6 487.8L386.8 483.8L375.5 478.6L366.2 473.0L361.6 469.6L356.5 465.3L347.9 456.0L343.0 449.1L338.4 441.1L333.8 430.9L329.1 417.3L326.1 405.2L324.1 396.0L321.3 377.5L319.2 359.1L317.4 336.0L316.0 308.3L315.1 280.6L314.1 192.8L313.7 35.8L296.7 35.8L296.7 520.7ZM649.3 299.0L699.7 300.9L783.1 301.7L783.1 35.8L516.4 35.8L516.8 91.2L517.5 132.8L518.8 165.1L520.5 188.2L522.6 206.7L526.0 225.1L529.9 239.0L533.0 247.2L535.7 252.9L538.2 257.5L542.2 263.3L549.4 271.3L554.9 275.9L560.7 279.9L571.1 285.2L584.1 289.8L602.4 294.0L625.6 297.1L649.3 299.0Z"/>
<path fill="#fff44d" d="M296.7 520.7L783.1 520.7L783.1 504.4L639.5 504.1L556.1 503.3L505.2 501.9L482.0 500.7L458.8 498.9L440.3 497.0L421.8 494.1L412.5 492.2L397.6 488.4L384.7 483.8L374.7 479.1L366.2 474.1L360.5 469.9L355.2 465.3L347.7 457.1L343.0 450.8L338.4 443.0L333.7 433.0L329.1 420.1L325.3 405.2L322.6 391.4L320.5 377.5L318.5 359.1L316.5 331.4L315.2 304.8L314.5 275.9L313.4 188.2L313.1 35.8L296.7 35.8L296.7 520.7ZM637.9 294.4L662.7 296.0L695.1 297.1L783.1 298.1L783.1 35.8L519.9 35.8L520.9 123.5L522.1 155.9L523.6 179.0L525.4 197.4L528.3 215.9L530.4 225.1L533.0 234.0L537.6 245.9L541.2 252.9L544.1 257.5L547.6 262.1L551.5 266.3L556.1 270.5L560.7 274.0L570.0 279.5L583.9 285.1L597.8 288.8L616.3 292.0L637.9 294.4Z"/>
<path fill="#ffe94d" d="M296.7 520.7L783.1 520.7L783.1 505.0L639.5 504.7L556.1 503.9L497.8 502.2L458.8 499.6L439.7 497.6L421.8 494.8L412.4 493.0L395.0 488.4L382.5 483.8L372.9 479.1L366.2 475.1L361.6 471.8L353.9 465.3L347.7 458.5L342.4 451.4L337.1 442.2L332.8 433.0L329.1 422.7L324.5 405.4L319.9 378.1L317.5 354.4L315.8 331.4L313.9 275.9L312.8 188.2L312.5 35.8L296.7 35.8L296.7 520.7ZM759.9 294.4L783.1 294.5L783.1 35.8L523.6 35.8L524.1 95.8L525.1 137.4L526.8 169.7L529.5 197.4L533.0 216.9L535.0 225.1L538.0 234.4L541.8 243.6L544.3 248.2L550.5 257.5L554.6 262.1L559.5 266.7L565.4 271.1L573.9 275.9L579.3 278.4L588.5 281.7L597.8 284.3L616.3 287.9L639.5 290.6L671.9 292.7L709.0 293.8L759.9 294.4Z"/>
<path fill="#ffde4d" d="M296.7 520.7L783.1 520.7L783.1 505.6L644.1 505.3L560.7 504.5L500.5 502.9L482.0 502.0L458.8 500.3L435.7 497.7L421.8 495.5L407.9 492.7L392.5 488.4L380.4 483.8L370.8 479.0L361.6 472.9L352.6 465.3L347.7 459.9L341.4 451.4L336.1 442.2L332.0 433.0L328.6 423.7L324.5 408.6L319.7 382.2L317.2 359.1L315.4 336.0L313.4 280.6L312.3 192.8L311.9 35.8L296.7 35.8L296.7 520.7ZM698.7 289.8L783.1 290.8L783.1 35.8L527.3 35.8L527.7 91.2L528.7 132.8L530.4 165.1L532.5 188.2L535.3 206.7L537.3 215.9L539.8 225.1L542.2 232.1L545.1 239.0L547.5 243.6L551.5 250.1L556.1 256.0L560.7 260.8L565.4 264.7L570.0 268.0L575.8 271.3L583.9 275.1L597.8 279.7L616.3 283.6L639.5 286.6L667.3 288.6L698.7 289.8Z"/>
<path fill="#ffd24d" d="M296.7 520.7L783.1 520.7L783.1 506.2L644.1 505.9L560.7 505.1L500.5 503.5L475.3 502.2L458.8 500.9L435.7 498.4L421.8 496.2L406.0 493.0L390.1 488.4L378.5 483.8L369.5 479.1L361.6 474.0L352.3 466.2L347.1 460.7L340.4 451.4L335.2 442.2L331.2 433.0L327.9 423.7L324.5 411.7L321.3 396.0L319.1 382.2L317.0 363.7L315.1 340.6L313.8 312.9L312.8 280.6L311.7 192.8L311.3 35.8L296.7 35.8L296.7 520.7ZM677.7 285.2L722.9 286.5L783.1 287.1L783.1 35.8L531.0 35.8L531.5 86.6L532.3 123.5L533.5 151.3L535.2 174.3L537.6 194.0L540.9 211.3L544.8 225.1L548.5 234.4L551.5 240.3L556.1 247.5L560.4 252.9L565.0 257.5L570.0 261.6L579.3 267.4L587.7 271.3L593.2 273.3L607.1 277.3L625.6 280.7L648.8 283.3L677.7 285.2Z"/>
<path fill="#ffc74d" d="M296.7 520.7L783.1 520.7L783.1 506.8L644.1 506.5L560.7 505.7L500.5 504.1L458.8 501.6L440.3 499.6L421.8 496.9L403.2 493.1L389.3 488.9L376.6 483.8L367.8 479.1L360.8 474.5L352.3 467.4L346.1 460.7L339.4 451.4L334.3 442.2L330.3 433.0L324.4 414.5L320.5 396.0L318.4 382.2L315.9 359.1L314.5 340.6L313.2 312.9L312.1 275.9L311.0 188.2L310.7 35.8L296.7 35.8L296.7 520.7ZM666.7 280.6L713.6 282.4L783.1 283.3L783.1 35.8L534.9 35.8L535.3 82.0L536.1 118.9L537.3 146.6L539.0 169.7L541.1 188.2L544.5 206.7L548.4 220.5L551.5 228.5L554.3 234.4L556.9 239.0L560.7 244.7L568.1 252.9L573.5 257.5L579.3 261.3L589.8 266.7L602.8 271.3L621.0 275.5L639.5 278.2L666.7 280.6Z"/>
<path fill="#ffbc4d" d="M296.7 520.7L783.1 520.7L783.1 507.3L639.5 507.0L565.4 506.4L505.2 504.9L458.8 502.2L440.3 500.2L421.6 497.6L403.2 493.7L394.0 491.1L384.7 488.0L375.5 484.1L370.8 481.7L361.6 476.0L352.3 468.5L345.0 460.7L338.4 451.4L333.8 442.9L329.5 433.0L325.0 419.1L322.7 409.9L319.9 396.2L317.8 382.2L315.2 359.1L313.9 340.6L312.6 312.9L311.5 275.9L310.5 197.4L310.1 35.8L296.7 35.8L296.7 520.7ZM660.6 275.9L681.2 277.2L709.0 278.3L783.1 279.3L783.1 35.8L538.8 35.8L540.0 114.3L541.2 142.0L542.8 165.1L545.0 183.6L548.3 202.1L552.1 215.9L555.7 225.1L557.9 229.8L563.4 239.0L567.0 243.6L571.3 248.2L579.3 254.8L583.9 257.8L592.1 262.1L604.4 266.7L621.0 270.8L639.5 273.8L660.6 275.9Z"/>
<path fill="#ffb14d" d="M296.7 520.7L783.1 520.7L783.1 507.8L639.5 507.6L556.6 506.8L500.5 505.3L477.4 504.1L454.2 502.4L435.7 500.3L417.9 497.6L403.2 494.4L394.0 491.9L383.5 488.4L370.8 482.6L361.6 477.0L352.3 469.7L343.9 460.7L338.4 452.8L333.8 444.6L329.1 434.1L324.5 420.1L322.0 409.9L319.9 399.9L317.2 382.2L315.2 365.6L313.4 340.6L312.0 312.9L310.9 275.9L309.9 192.8L309.6 35.8L296.7 35.8L296.7 520.7ZM657.4 271.3L681.2 273.0L709.0 274.2L783.1 275.3L783.1 35.8L542.8 35.8L543.4 82.0L544.2 114.3L545.4 142.0L547.2 165.1L549.6 183.6L552.2 197.4L556.1 211.8L561.6 225.1L567.0 234.4L570.5 239.0L574.6 243.6L579.3 247.8L583.9 251.2L593.2 256.6L606.6 262.1L621.0 266.0L639.5 269.3L657.4 271.3Z"/>
<path fill="#ffa64d" d="M296.7 520.7L783.1 520.7L783.1 508.3L634.9 508.1L551.5 507.3L495.9 505.7L454.2 503.0L435.7 500.9L417.1 498.1L407.9 496.2L394.0 492.7L381.5 488.4L370.8 483.5L361.6 478.0L356.7 474.5L351.4 469.9L343.0 460.8L338.4 454.3L333.8 446.3L329.1 436.1L324.5 422.7L321.3 409.9L318.6 396.0L315.9 377.5L314.1 359.1L312.5 336.0L311.2 308.3L310.3 275.9L309.4 188.2L309.1 35.8L296.7 35.8L296.7 520.7ZM656.3 266.7L676.6 268.4L704.3 269.8L736.8 270.6L783.1 271.2L783.1 35.8L547.0 35.8L548.2 109.7L549.5 137.4L551.3 160.5L553.6 179.0L556.2 192.8L559.9 206.7L565.4 220.4L570.8 229.8L574.2 234.4L578.3 239.0L583.4 243.6L588.5 247.5L597.8 252.8L609.2 257.5L621.0 260.9L634.9 263.8L656.3 266.7Z"/>
<path fill="#ff9b4d" d="M296.7 520.7L783.1 520.7L783.1 508.9L634.9 508.6L551.5 507.8L500.5 506.5L477.4 505.3L454.2 503.5L435.7 501.6L417.1 498.7L407.9 496.9L392.6 493.0L379.6 488.4L369.7 483.8L361.6 478.9L355.5 474.5L350.2 469.9L343.0 462.1L338.4 455.8L333.8 447.9L328.9 437.6L324.5 425.1L320.6 409.9L317.9 396.0L315.3 377.5L313.1 354.4L311.7 331.4L310.6 307.5L309.8 275.9L308.9 188.2L308.6 35.8L296.7 35.8L296.7 520.7ZM756.1 266.7L783.1 267.0L783.1 35.8L551.2 35.8L551.8 82.0L553.0 118.9L554.7 146.6L557.1 169.7L560.7 190.0L565.6 206.7L569.5 215.9L571.9 220.5L574.7 225.1L579.3 231.1L583.9 236.1L588.5 240.1L593.3 243.6L601.4 248.2L607.1 250.8L616.3 254.2L625.6 256.8L634.9 258.8L656.7 262.1L681.2 264.2L713.6 265.8L756.1 266.7Z"/>
<path fill="#ff8f4d" d="M296.7 520.7L783.1 520.7L783.1 509.4L639.5 509.1L556.1 508.4L496.2 506.8L454.2 504.1L435.7 502.2L417.1 499.4L407.9 497.6L390.3 493.0L377.7 488.4L368.1 483.8L361.6 479.8L356.9 476.6L349.1 469.9L343.0 463.3L337.7 456.0L332.4 446.8L328.2 437.6L324.5 427.4L319.9 409.9L315.2 382.1L312.9 359.1L311.3 336.0L310.3 312.9L309.4 280.6L308.4 192.8L308.0 35.8L296.7 35.8L296.7 520.7ZM741.7 262.1L783.1 262.6L783.1 35.8L555.6 35.8L556.2 82.0L557.5 118.9L559.4 146.6L562.1 169.7L565.7 188.2L570.0 202.6L573.7 211.3L576.1 215.9L579.3 221.1L583.9 227.2L588.5 232.0L593.2 236.0L597.8 239.4L605.2 243.6L616.3 248.4L625.6 251.3L634.9 253.6L653.4 256.8L676.6 259.2L704.3 260.9L741.7 262.1Z"/>
<path fill="#ff844d" d="M296.7 520.7L783.1 520.7L783.1 509.9L639.5 509.7L556.1 508.9L495.9 507.3L477.4 506.4L454.2 504.7L431.2 502.2L417.1 500.0L403.2 497.2L388.1 493.0L375.9 488.4L366.2 483.5L356.9 477.5L348.0 469.9L343.0 464.5L336.8 456.0L331.6 446.8L327.4 437.6L324.1 428.3L319.9 412.7L316.7 396.0L314.7 382.2L312.4 359.1L310.7 336.0L308.9 280.6L307.8 192.8L307.5 35.8L296.7 35.8L296.7 520.7ZM737.5 257.5L783.1 258.2L783.1 35.8L560.0 35.8L560.7 77.4L561.7 109.7L563.4 137.4L565.8 160.5L568.1 174.3L570.0 183.3L574.2 197.4L579.3 209.1L583.3 215.9L586.6 220.5L590.6 225.1L595.4 229.8L601.5 234.4L607.1 237.8L619.8 243.6L634.9 248.2L653.4 251.7L676.6 254.4L704.3 256.3L737.5 257.5Z"/>
<path fill="#ff794d" d="M296.7 520.7L783.1 520.7L783.1 510.4L639.5 510.2L556.1 509.4L495.9 507.9L475.0 506.8L454.2 505.3L431.0 502.8L417.1 500.6L402.2 497.6L386.0 493.0L374.2 488.4L365.1 483.8L356.9 478.5L347.7 470.6L343.0 465.7L339.1 460.7L333.8 452.5L329.1 443.4L325.0 433.0L320.8 419.1L318.6 409.9L316.1 396.0L314.1 382.2L312.2 363.7L310.5 340.6L309.2 312.9L308.3 280.6L307.3 192.8L307.0 35.8L296.7 35.8L296.7 520.7ZM739.4 252.9L783.1 253.6L783.1 35.8L564.6 35.8L565.3 77.4L566.5 109.7L568.4 137.4L571.1 160.5L574.6 178.9L578.8 192.8L583.9 204.6L587.8 211.3L591.1 215.9L595.1 220.5L600.0 225.1L606.0 229.8L611.7 233.3L624.3 239.0L639.5 243.6L658.0 247.2L681.2 249.9L709.0 251.7L739.4 252.9Z"/>
<path fill="#ff6e4d" d="M296.7 520.7L783.1 520.7L783.1 511.0L639.5 510.7L556.1 510.0L495.9 508.4L472.7 507.2L454.2 505.8L431.0 503.3L417.1 501.2L399.6 497.6L384.7 493.2L372.6 488.4L363.7 483.8L356.6 479.1L347.7 471.6L343.0 466.8L338.4 461.0L333.8 453.9L329.1 445.1L324.5 433.7L320.1 419.1L318.0 409.9L315.2 394.8L313.5 382.2L311.2 359.1L309.9 340.6L308.7 312.9L307.7 275.9L306.8 188.2L306.5 35.8L296.7 35.8L296.7 520.7ZM747.0 248.2L783.1 248.8L783.1 35.8L569.4 35.8L570.2 77.4L571.4 109.7L573.5 137.4L575.8 155.9L579.4 174.3L583.9 189.2L587.4 197.4L589.8 202.1L593.2 207.5L597.8 213.5L602.4 218.4L607.1 222.4L616.3 228.5L621.0 230.9L629.3 234.4L644.7 239.0L662.7 242.5L685.8 245.2L713.6 247.0L747.0 248.2Z"/>
<path fill="#ff634d" d="M296.7 520.7L783.1 520.7L783.1 511.5L639.5 511.2L556.1 510.5L495.9 508.9L454.2 506.4L435.7 504.5L419.3 502.2L403.2 499.1L389.3 495.4L375.5 490.4L366.2 485.9L355.4 479.1L347.7 472.7L340.8 465.3L334.2 456.0L329.1 446.7L324.5 435.6L319.9 420.6L317.4 409.9L314.9 396.0L312.4 377.5L310.6 358.6L309.2 336.0L308.0 308.3L307.1 271.3L306.2 188.2L305.9 35.8L296.7 35.8L296.7 520.7ZM761.9 243.6L783.1 244.0L783.1 35.8L574.3 35.8L575.0 72.7L576.3 105.1L578.4 132.8L580.7 151.3L584.3 169.7L588.5 183.7L592.4 192.8L594.8 197.4L597.8 202.3L602.4 208.4L607.1 213.3L611.7 217.3L616.3 220.7L624.0 225.1L634.9 229.8L644.1 232.7L653.4 235.0L671.9 238.2L695.1 240.7L722.9 242.4L761.9 243.6Z"/>
<path fill="#ff584d" d="M296.7 520.7L783.1 520.7L783.1 512.0L634.9 511.7L556.1 511.0L495.9 509.4L452.8 506.8L435.7 505.0L415.9 502.2L398.6 498.6L389.3 496.0L380.1 493.0L366.2 486.7L356.9 481.1L347.7 473.7L339.9 465.3L333.8 456.7L329.1 448.2L324.5 437.6L319.9 423.1L316.8 409.9L314.3 396.0L311.9 377.5L310.1 359.1L308.4 331.4L306.6 271.3L305.8 192.8L305.5 35.8L296.7 35.8L296.7 520.7ZM686.1 234.4L704.3 236.0L727.5 237.4L783.1 238.9L783.1 35.8L579.4 35.8L580.9 91.2L582.3 114.3L583.9 132.8L586.6 151.3L589.5 165.1L593.2 177.5L597.8 188.6L603.0 197.4L606.4 202.1L610.5 206.7L615.5 211.3L621.0 215.4L629.9 220.5L640.9 225.1L653.4 228.8L667.3 231.7L686.1 234.4Z"/>
<path fill="#ff4d4d" d="M296.7 520.7L783.1 520.7L783.1 512.4L639.5 512.2L556.1 511.5L495.9 509.9L472.7 508.8L449.6 507.1L431.0 505.0L412.6 502.2L398.6 499.2L389.3 496.7L378.3 493.0L366.2 487.5L356.9 481.9L347.5 474.5L343.0 470.1L339.0 465.3L333.8 457.9L329.1 449.8L324.5 439.3L319.9 425.3L316.2 409.9L313.7 396.0L311.3 377.5L309.6 359.1L307.9 331.4L306.1 271.3L305.3 188.2L305.0 35.8L296.7 35.8L296.7 520.7ZM696.7 229.8L732.1 232.2L783.1 233.6L783.1 35.8L584.7 35.8L585.4 68.1L586.6 95.8L588.3 118.9L590.4 137.4L592.7 151.3L596.1 165.1L601.0 179.0L605.6 188.2L611.7 197.0L616.3 202.2L621.0 206.3L625.6 209.8L636.3 215.9L648.8 220.8L662.7 224.6L676.6 227.2L696.7 229.8Z"/>
<path fill="#f44d4d" d="M296.7 520.7L783.1 520.7L783.1 512.9L634.9 512.6L546.8 511.9L491.3 510.2L468.1 509.0L444.9 507.2L426.4 504.9L409.5 502.2L394.0 498.6L384.7 495.9L376.6 493.0L366.2 488.3L356.9 482.8L351.9 479.1L346.5 474.5L338.4 465.7L333.8 459.2L329.1 451.3L323.2 437.6L319.9 427.6L315.6 409.9L313.2 396.0L310.7 377.5L308.8 354.4L307.4 331.4L305.6 275.9L304.8 188.2L304.5 35.8L296.7 35.8L296.7 520.7ZM710.5 225.1L741.4 227.0L783.1 228.2L783.1 35.8L590.1 35.8L591.0 68.1L592.0 91.2L593.7 114.3L595.9 132.8L598.3 146.6L602.4 162.9L606.7 174.3L611.7 183.9L618.1 192.8L625.6 200.3L634.5 206.7L644.1 211.6L658.0 216.6L671.9 220.0L690.5 223.0L710.5 225.1Z"/>
<path fill="#e94d4d" d="M296.7 520.7L783.1 520.7L783.1 513.3L634.9 513.1L542.2 512.3L486.6 510.5L444.9 507.7L426.4 505.5L407.9 502.5L394.0 499.2L384.7 496.5L374.9 493.0L365.0 488.4L356.9 483.6L350.8 479.1L345.5 474.5L338.4 466.8L333.8 460.5L328.5 451.4L324.5 442.8L322.5 437.6L319.5 428.3L315.0 409.9L312.6 396.0L310.2 377.5L307.1 336.0L305.2 280.6L304.4 188.2L304.1 35.8L296.7 35.8L296.7 520.7ZM729.6 220.5L755.3 221.7L783.1 222.5L783.1 35.8L595.8 35.8L596.8 68.1L597.9 91.2L599.9 114.3L602.4 132.8L605.1 146.6L609.1 160.5L611.7 167.3L615.1 174.3L620.8 183.6L625.6 189.3L630.2 193.8L634.9 197.6L644.1 203.3L651.2 206.7L658.0 209.3L671.9 213.2L685.8 216.0L704.3 218.4L729.6 220.5Z"/>
<path fill="#de4d4d" d="M296.7 520.7L783.1 520.7L783.1 513.8L634.9 513.5L533.0 512.7L509.8 512.1L482.0 510.8L440.3 507.9L407.9 503.1L389.3 498.6L380.1 495.6L370.8 491.9L361.6 487.2L352.3 481.1L344.5 474.5L338.4 467.8L333.1 460.7L327.8 451.4L324.5 444.4L321.9 437.6L318.9 428.3L314.3 409.9L309.6 377.5L306.6 336.0L305.3 308.3L304.7 285.2L303.9 183.6L303.6 35.8L296.7 35.8L296.7 520.7ZM760.3 215.9L783.1 216.6L783.1 35.8L601.8 35.8L602.6 63.5L604.2 91.2L606.4 114.3L609.3 132.8L612.4 146.6L617.1 160.5L621.0 168.7L624.3 174.3L630.2 182.2L634.9 186.9L639.5 190.8L648.8 196.9L660.0 202.1L674.7 206.7L690.5 209.9L709.0 212.5L732.1 214.5L760.3 215.9Z"/>
<path fill="#d24d4d" d="M296.7 520.7L783.1 520.7L783.1 514.3L634.9 514.0L528.3 513.2L495.9 512.2L440.3 508.5L431.0 507.4L407.9 503.7L403.2 502.9L384.7 497.9L371.7 493.0L361.6 488.0L352.3 482.0L343.5 474.5L335.6 465.3L329.5 456.0L324.9 446.8L321.2 437.6L319.5 433.0L314.6 414.5L309.4 382.2L305.2 322.1L304.2 289.8L303.4 183.6L303.2 35.8L296.7 35.8L296.7 520.7ZM717.1 206.7L746.0 208.9L783.1 210.4L783.1 35.8L608.0 35.8L609.0 63.5L610.4 86.6L612.1 105.1L614.8 123.5L617.7 137.4L621.0 148.4L625.6 159.8L630.2 168.0L634.9 174.4L639.5 179.5L644.1 183.6L653.4 190.0L662.7 194.6L671.9 198.0L685.8 201.8L699.7 204.4L717.1 206.7Z"/>
<path fill="#c74d4d" d="M296.7 520.7L783.1 520.7L783.1 514.7L634.9 514.5L519.1 513.6L486.6 512.5L435.7 508.7L403.2 503.7L384.7 498.8L370.8 493.5L361.6 488.9L352.3 482.8L343.0 475.0L338.3 469.9L334.7 465.3L328.6 456.0L324.0 446.8L318.7 433.0L313.8 414.5L308.7 382.2L304.9 331.4L303.8 299.0L302.9 183.6L302.7 35.8L296.7 35.8L296.7 520.7ZM743.7 202.1L783.1 203.8L783.1 35.8L614.5 35.8L615.4 58.9L616.8 82.0L618.7 100.5L621.4 118.9L624.5 132.8L629.0 146.6L633.2 155.9L639.5 165.8L647.2 174.3L653.4 179.5L662.7 185.2L668.9 188.2L676.6 191.1L690.5 195.0L704.3 197.8L722.9 200.3L743.7 202.1Z"/>
<path fill="#bc4d4d" d="M296.7 520.7L783.1 520.7L783.1 515.2L639.5 515.0L509.8 514.1L482.0 513.1L467.4 511.5L431.0 509.0L426.4 508.4L420.6 506.8L403.2 504.4L398.6 503.4L396.3 502.2L389.3 500.4L384.7 499.7L375.5 495.8L370.8 494.5L368.7 493.0L361.6 489.9L347.7 480.4L343.0 476.1L337.2 469.9L333.8 465.1L327.6 456.0L324.5 449.0L323.0 446.8L321.7 442.2L317.8 433.0L317.0 428.3L315.2 421.4L314.1 419.1L313.0 414.5L310.6 397.1L309.0 391.4L308.4 386.8L306.0 350.6L304.3 336.0L303.3 308.3L302.5 179.0L302.2 35.8L296.7 35.8L296.7 520.7ZM722.6 192.8L750.7 195.4L783.1 197.0L783.1 35.8L621.4 35.8L622.4 58.9L624.1 82.0L626.2 100.5L628.5 114.3L631.7 128.2L634.7 137.4L638.6 146.6L643.8 155.9L648.8 162.4L656.1 169.7L662.7 174.6L671.9 179.9L681.2 183.8L695.1 187.9L709.0 190.8L722.6 192.8Z"/>
<path fill="#b14d4d" d="M296.7 520.7L783.1 520.7L783.1 515.7L528.3 514.9L491.3 514.4L472.7 513.6L463.5 512.3L460.2 511.5L426.4 509.4L421.8 508.7L417.2 506.8L398.6 504.5L394.0 502.2L389.3 501.0L384.7 500.5L380.1 499.0L378.6 497.6L375.5 496.4L370.8 495.5L367.2 493.0L361.6 490.9L358.4 488.4L352.3 485.1L347.7 481.5L343.0 477.1L336.0 469.9L332.4 465.3L329.1 459.1L326.6 456.0L324.5 450.4L321.9 446.8L321.0 442.2L319.9 439.1L318.4 437.6L317.0 433.0L316.4 428.3L315.2 423.7L312.9 419.1L310.6 400.6L308.7 396.0L308.0 391.4L306.0 357.7L305.1 354.4L303.8 345.2L302.8 317.5L302.0 174.3L301.8 35.8L296.7 35.8L296.7 520.7ZM754.2 188.2L783.1 189.7L783.1 35.8L628.7 35.8L630.2 63.5L631.8 82.0L634.3 100.5L637.0 114.3L640.9 128.2L644.6 137.4L649.4 146.6L656.2 155.9L662.7 162.3L671.9 169.0L681.2 173.9L690.5 177.5L704.3 181.4L718.2 184.2L736.8 186.6L754.2 188.2Z"/>
<path fill="#b04d4d" d="M296.7 520.7L783.1 520.7L783.1 516.4L505.2 515.4L477.4 515.0L463.5 514.2L458.8 513.5L453.9 511.5L421.8 510.1L417.1 509.1L414.0 506.8L398.6 505.7L394.0 504.5L391.7 502.2L389.3 501.6L380.1 500.6L376.9 497.6L375.5 497.1L370.8 496.6L366.2 494.1L365.1 493.0L361.6 492.0L356.9 488.2L352.3 486.8L343.0 478.1L330.8 465.3L329.3 460.7L325.5 456.0L324.5 452.5L323.4 451.4L320.9 446.8L320.4 442.2L319.9 440.8L316.8 437.6L315.8 428.3L315.2 426.0L312.9 423.7L311.8 419.1L310.6 403.7L308.3 400.6L307.4 396.0L306.3 368.3L306.0 364.0L303.9 359.1L303.2 354.4L302.2 331.4L301.0 35.8L296.7 35.8L296.7 520.7ZM741.2 179.0L759.9 180.7L783.1 182.1L783.1 35.8L636.4 35.8L637.8 58.9L639.5 77.4L641.4 91.2L644.0 105.1L646.3 114.3L649.3 123.5L653.4 133.0L658.6 142.0L662.1 146.6L666.2 151.3L671.9 156.5L681.2 162.7L690.5 167.3L699.7 170.8L712.9 174.3L727.5 177.1L741.2 179.0Z"/>
<g stroke="#000" stroke-opacity="0.07" stroke-width="1"><line x1="343.0" y1="35.8" x2="343.0" y2="520.7"/><line x1="296.7" y1="474.5" x2="783.1" y2="474.5"/><line x1="389.3" y1="35.8" x2="389.3" y2="520.7"/><line x1="296.7" y1="428.3" x2="783.1" y2="428.3"/><line x1="435.7" y1="35.8" x2="435.7" y2="520.7"/><line x1="296.7" y1="382.2" x2="783.1" y2="382.2"/><line x1="482.0" y1="35.8" x2="482.0" y2="520.7"/><line x1="296.7" y1="336.0" x2="783.1" y2="336.0"/><line x1="528.3" y1="35.8" x2="528.3" y2="520.7"/><line x1="296.7" y1="289.8" x2="783.1" y2="289.8"/><line x1="574.6" y1="35.8" x2="574.6" y2="520.7"/><line x1="296.7" y1="243.6" x2="783.1" y2="243.6"/><line x1="621.0" y1="35.8" x2="621.0" y2="520.7"/><line x1="296.7" y1="197.4" x2="783.1" y2="197.4"/><line x1="667.3" y1="35.8" x2="667.3" y2="520.7"/><line x1="296.7" y1="151.3" x2="783.1" y2="151.3"/><line x1="713.6" y1="35.8" x2="713.6" y2="520.7"/><line x1="296.7" y1="105.1" x2="783.1" y2="105.1"/><line x1="759.9" y1="35.8" x2="759.9" y2="520.7"/><line x1="296.7" y1="58.9" x2="783.1" y2="58.9"/></g>
<g stroke="#640b0b" stroke-width="1"><line x1="296.7" y1="520.7" x2="296.7" y2="516.2"/><line x1="296.7" y1="520.7" x2="301.2" y2="520.7"/><line x1="343.0" y1="520.7" x2="343.0" y2="516.2"/><line x1="296.7" y1="474.5" x2="301.2" y2="474.5"/><line x1="389.3" y1="520.7" x2="389.3" y2="516.2"/><line x1="296.7" y1="428.3" x2="301.2" y2="428.3"/><line x1="435.7" y1="520.7" x2="435.7" y2="516.2"/><line x1="296.7" y1="382.2" x2="301.2" y2="382.2"/><line x1="482.0" y1="520.7" x2="482.0" y2="516.2"/><line x1="296.7" y1="336.0" x2="301.2" y2="336.0"/><line x1="528.3" y1="520.7" x2="528.3" y2="516.2"/><line x1="296.7" y1="289.8" x2="301.2" y2="289.8"/><line x1="574.6" y1="520.7" x2="574.6" y2="516.2"/><line x1="296.7" y1="243.6" x2="301.2" y2="243.6"/><line x1="621.0" y1="520.7" x2="621.0" y2="516.2"/><line x1="296.7" y1="197.4" x2="301.2" y2="197.4"/><line x1="667.3" y1="520.7" x2="667.3" y2="516.2"/><line x1="296.7" y1="151.3" x2="301.2" y2="151.3"/><line x1="713.6" y1="520.7" x2="713.6" y2="516.2"/><line x1="296.7" y1="105.1" x2="301.2" y2="105.1"/><line x1="759.9" y1="520.7" x2="759.9" y2="516.2"/><line x1="296.7" y1="58.9" x2="301.2" y2="58.9"/><path d="M296.9 35V520.5H784" fill="none" stroke-width="1.6"/></g>
<path fill="none" stroke="#0000af" stroke-width="1" shape-rendering="crispEdges" d="M783.10 462.56L676.56 461.99L607.07 460.88L565.38 459.10L524.64 456.05L494.20 451.43L476.00 446.81L463.70 442.19L455.07 437.57L449.05 432.96L445.50 428.34L445.62 423.72L449.57 421.73L454.20 420.64L458.83 420.08L468.10 419.59L644.13 417.84L783.10 417.21M400.51 35.80L399.87 174.34L398.12 349.83L397.63 359.07L397.07 363.68L395.97 368.30L393.98 372.24L389.35 372.36L384.72 368.82L380.08 362.82L375.45 354.22L370.82 341.95L366.19 323.81L361.55 293.46L358.49 252.85L356.71 211.29L355.59 142.02L355.02 35.80"/>
<path fill="none" stroke="#0030ff" stroke-width="1" shape-rendering="crispEdges" d="M783.10 478.26L662.66 477.85L583.91 476.83L551.48 475.93L523.69 474.73L505.16 473.42L486.63 471.68L471.50 469.90L449.57 465.98L435.67 462.49L426.41 459.61L416.93 456.05L407.88 451.75L403.24 449.12L399.36 446.81L392.82 442.19L384.72 435.20L378.28 428.34L371.32 419.10L366.19 410.50L361.46 400.63L356.92 388.43L352.29 371.67L348.20 349.83L346.38 335.98L344.52 317.50L343.02 298.25L341.78 271.32L340.81 239.00L339.72 160.49L339.27 35.80M428.50 35.80L428.48 155.87L428.88 215.91L429.93 257.47L430.91 275.94L432.01 289.80L433.60 303.65L435.95 317.50L438.13 326.74L441.05 335.98L445.02 345.21L449.57 352.91L454.20 358.86L458.83 363.50L465.01 368.30L472.73 372.84L477.36 374.98L486.63 378.36L495.89 380.87L505.16 382.76L519.05 384.82L532.95 386.22L565.38 388.06L607.07 388.99L667.29 389.34L783.10 389.31"/>
<path fill="none" stroke="#00afff" stroke-width="1" shape-rendering="crispEdges" d="M783.10 487.56L653.39 487.20L574.64 486.29L542.22 485.48L514.42 484.37L495.89 483.26L477.36 481.65L455.64 479.14L444.94 477.33L430.80 474.52L414.35 469.90L402.24 465.28L392.85 460.66L384.72 455.68L379.01 451.43L373.76 446.81L366.19 438.64L361.92 432.96L359.00 428.34L356.32 423.72L352.29 415.48L348.31 405.25L343.02 387.02L341.07 377.54L338.39 362.25L336.34 345.21L334.62 326.74L333.37 308.27L332.19 280.56L331.31 248.23L330.34 169.72L329.94 35.80M451.56 35.80L451.70 132.78L452.24 188.20L453.48 229.76L454.55 248.23L455.73 262.09L457.39 275.94L459.76 289.80L461.93 299.03L464.76 308.27L468.54 317.50L472.73 325.14L477.13 331.36L481.25 335.98L486.63 340.83L492.86 345.21L500.52 349.39L509.79 353.16L519.05 355.98L528.32 358.14L542.22 360.51L556.11 362.16L570.01 363.34L588.54 364.40L630.23 365.64L685.82 366.18L783.10 366.32"/>
<path fill="none" stroke="#20ffdf" stroke-width="1" shape-rendering="crispEdges" d="M783.10 494.51L644.13 494.18L560.75 493.28L532.95 492.55L505.16 491.37L482.00 489.93L463.79 488.37L444.94 485.93L431.62 483.76L412.51 479.27L403.24 476.29L398.25 474.52L389.35 470.61L380.08 465.57L372.95 460.66L366.19 454.96L358.61 446.81L352.29 438.04L347.66 429.81L342.89 419.10L338.26 405.25L333.88 386.78L331.58 372.92L329.13 354.12L327.57 335.98L326.12 312.89L324.93 285.18L324.21 257.47L323.31 174.34L322.97 35.80M474.13 35.80L474.38 118.93L475.06 169.72L476.57 211.29L478.74 239.00L480.50 252.85L482.98 266.70L485.24 275.94L488.17 285.18L492.07 294.41L495.89 301.32L500.52 307.88L505.01 312.89L510.18 317.50L516.76 322.12L523.69 325.94L532.95 329.82L542.22 332.74L551.48 334.99L565.38 337.47L579.28 339.22L607.07 341.38L648.76 342.89L699.72 343.56L783.10 343.82"/>
<path fill="none" stroke="#9fff60" stroke-width="1" shape-rendering="crispEdges" d="M783.10 500.18L639.50 499.86L556.11 498.98L505.16 497.50L482.00 496.17L458.83 494.26L440.30 492.06L421.77 488.93L407.88 485.62L398.61 482.88L388.50 479.14L380.08 475.19L375.45 472.60L370.82 469.76L364.75 465.28L356.92 458.11L352.29 452.86L347.79 446.81L343.02 438.86L338.39 429.19L333.76 416.48L329.55 400.63L327.71 391.39L324.49 370.90L322.78 354.45L321.00 331.36L319.86 310.57L318.40 257.47L317.58 174.34L317.28 35.80M497.82 35.80L498.23 109.69L499.09 155.87L500.76 192.82L503.32 220.52L505.16 233.08L507.24 243.61L509.58 252.85L512.67 262.09L514.53 266.70L519.28 275.94L523.69 282.41L528.32 287.81L535.73 294.41L542.22 298.81L551.48 303.54L556.11 305.40L565.38 308.48L574.64 310.81L585.21 312.89L597.80 314.71L625.60 317.27L662.66 318.93L708.98 319.79L783.10 320.20"/>
<path fill="none" stroke="#ffdf00" stroke-width="1" shape-rendering="crispEdges" d="M783.10 505.03L639.50 504.73L556.11 503.93L496.21 502.23L472.73 500.80L454.20 499.25L439.13 497.61L421.77 494.87L407.88 492.00L393.98 488.15L382.21 483.76L370.82 478.08L361.55 471.96L356.92 468.22L352.29 463.86L345.59 456.05L342.30 451.43L338.39 444.96L333.76 435.45L329.13 423.05L324.49 405.75L322.61 396.01L319.86 378.71L317.79 359.07L316.33 340.59L315.04 317.50L313.44 257.47L312.69 174.34L312.42 35.80M523.99 35.80L524.51 95.84L525.52 137.40L527.21 169.72L528.39 183.58L530.04 197.43L532.31 211.29L534.35 220.52L536.96 229.76L540.39 239.00L544.95 248.23L547.83 252.85L551.48 257.75L556.11 262.80L560.75 266.94L566.88 271.32L574.64 275.68L583.91 279.59L593.17 282.56L602.44 284.87L620.97 288.08L634.86 289.73L648.76 290.90L681.19 292.58L722.88 293.59L783.10 294.11"/>
<path fill="none" stroke="#ff7000" stroke-width="1" shape-rendering="crispEdges" d="M783.10 509.26L639.50 509.00L556.11 508.27L499.59 506.85L477.36 505.69L454.20 503.97L435.67 502.06L417.14 499.20L407.88 497.42L390.91 492.99L378.21 488.37L368.53 483.76L361.55 479.61L356.92 476.31L349.40 469.90L345.00 465.28L341.23 460.66L338.39 456.76L335.09 451.43L329.13 439.45L325.01 428.34L321.16 414.48L319.12 405.25L316.05 386.78L313.90 368.30L312.05 345.21L310.76 322.12L309.24 266.70L308.46 183.58L308.17 35.80M554.44 35.80L555.20 86.60L556.55 123.54L558.57 151.25L560.14 165.11L561.53 174.34L563.28 183.58L565.46 192.82L568.33 202.05L572.06 211.29L574.64 216.44L579.28 223.79L583.91 229.58L588.54 234.21L593.17 238.01L597.80 241.18L602.44 243.91L611.76 248.23L625.91 252.85L634.86 254.95L648.76 257.43L671.92 260.06L699.72 261.89L736.78 263.10L783.10 263.76"/>
<path fill="none" stroke="#ef0000" stroke-width="1" shape-rendering="crispEdges" d="M783.10 513.05L634.86 512.80L546.85 512.09L491.26 510.42L468.10 509.16L444.94 507.38L426.41 505.14L408.42 502.23L393.98 498.86L384.72 496.13L375.45 492.80L365.83 488.37L356.92 483.10L351.46 479.14L346.14 474.52L338.39 466.10L333.76 459.68L328.95 451.43L324.69 442.19L322.95 437.57L319.85 428.34L315.23 409.32L312.30 391.39L310.06 372.92L308.27 349.83L307.01 326.74L305.34 271.32L304.63 183.58L304.37 35.80M592.23 35.80L593.27 72.74L594.81 100.45L597.00 123.54L599.86 142.02L603.03 155.87L607.69 169.72L611.70 178.28L614.85 183.58L618.11 188.20L622.00 192.82L626.74 197.43L632.65 202.05L639.50 206.30L644.13 208.63L650.32 211.29L658.03 213.95L671.92 217.55L690.45 220.74L713.61 223.16L746.04 225.05L783.10 226.08"/>
<path fill="none" stroke="#8e0000" stroke-width="1" shape-rendering="crispEdges" d="M783.10 520.70L597.80 520.69L593.18 516.08L449.57 516.08L444.94 511.46L412.51 511.46L407.88 506.85L393.98 506.85L389.35 502.23L375.45 502.23L370.82 497.61L366.19 497.61L361.55 492.99L356.92 492.99L343.02 479.14L324.49 460.66L324.49 456.05L319.86 451.43L319.86 446.81L315.23 442.19L315.23 428.34L310.60 423.72L310.60 409.87L305.97 405.25L305.96 372.92L301.33 368.30L301.33 225.13L296.71 220.52L296.70 35.80M648.75 35.80L648.76 77.38L653.38 81.98L653.39 100.46L658.02 105.07L658.03 114.32L662.65 118.93L662.66 123.58L667.25 128.16L667.29 132.78L676.56 142.02L685.82 151.25L690.45 151.29L695.05 155.87L699.72 155.88L704.34 160.49L713.61 160.50L718.24 165.11L736.78 165.12L741.39 169.72L783.10 169.73"/>
<path d="M414.2 401.3 L412.3 401.4 L410.5 400.9 L408.8 399.8 L407.0 397.8 L404.2 394.0 L398.1 384.6 L389.2 370.4 L384.0 360.6 L380.6 352.6 L378.5 345.2 L377.3 337.6 L377.1 333.2 L377.3 327.7 L377.9 322.0 L380.6 302.9 L381.1 295.0 L381.1 288.0 L380.5 280.6 L379.5 272.8 L375.0 248.2 L373.4 238.2 L372.6 230.0 L372.4 222.1 L372.6 215.8 L373.4 208.3 L377.4 186.0 L378.5 178.3 L379.2 170.4 L379.3 162.3 L379.0 155.5 L378.1 146.7 L372.8 110.6 L372.1 101.9 L371.9 95.1 L372.1 88.4 L372.9 80.4 L377.3 55.4 L378.4 47.5 L379.0 39.3 L379.1 30.9" fill="none" stroke="#000" stroke-width="4.7" stroke-linejoin="round" stroke-linecap="butt"/>
</g>
<g font-family="Liberation Sans, sans-serif" font-size="11.7px" fill="#303030" style="filter:grayscale(1)"><text x="296.7" y="538.7" text-anchor="middle">0.4</text><text x="343.0" y="538.7" text-anchor="middle">0.6</text><text x="389.3" y="538.7" text-anchor="middle">0.8</text><text x="435.7" y="538.7" text-anchor="middle">1</text><text x="482.0" y="538.7" text-anchor="middle">1.2</text><text x="528.3" y="538.7" text-anchor="middle">1.4</text><text x="574.6" y="538.7" text-anchor="middle">1.6</text><text x="621.0" y="538.7" text-anchor="middle">1.8</text><text x="667.3" y="538.7" text-anchor="middle">2</text><text x="713.6" y="538.7" text-anchor="middle">2.2</text><text x="759.9" y="538.7" text-anchor="middle">2.4</text><text x="292.4" y="526.0" text-anchor="end">0.4</text><text x="292.4" y="479.8" text-anchor="end">0.6</text><text x="292.4" y="433.6" text-anchor="end">0.8</text><text x="292.4" y="387.4" text-anchor="end">1</text><text x="292.4" y="341.2" text-anchor="end">1.2</text><text x="292.4" y="295.0" text-anchor="end">1.4</text><text x="292.4" y="248.9" text-anchor="end">1.6</text><text x="292.4" y="202.7" text-anchor="end">1.8</text><text x="292.4" y="156.5" text-anchor="end">2</text><text x="292.4" y="110.3" text-anchor="end">2.2</text><text x="292.4" y="64.1" text-anchor="end">2.4</text></g>
<text x="539.6" y="554.3" text-anchor="middle" font-family="Liberation Serif, serif" font-size="14.2px" fill="#484848" style="filter:grayscale(1)" textLength="132" lengthAdjust="spacing">A-B bond distance (Å)</text>
<text transform="translate(266.8,278.8) rotate(-90)" text-anchor="middle" font-family="Liberation Serif, serif" font-size="14.2px" fill="#484848" style="filter:grayscale(1)" textLength="130" lengthAdjust="spacing">B-C bond distance (Å)</text>
</svg>
<div class="tb"></div><div class="tbl1"></div><div class="tbl2"></div><div class="tbl3"></div>
<svg class="abs" style="left:0;top:0" width="400" height="21" viewBox="0 0 400 21">
<defs>
<linearGradient id="pg" x1="0" y1="0" x2="1" y2="1"><stop offset="0" stop-color="#fff"/><stop offset="1" stop-color="#cfe0f7"/></linearGradient>
<linearGradient id="fo" x1="0" y1="0" x2="0" y2="1"><stop offset="0" stop-color="#fdf0a8"/><stop offset="1" stop-color="#e8b62c"/></linearGradient>
<linearGradient id="cb" x1="0" y1="0" x2="0" y2="1"><stop offset="0" stop-color="#6a7fd8"/><stop offset="0.35" stop-color="#8fd0e8"/><stop offset="0.6" stop-color="#bfe8b0"/><stop offset="0.8" stop-color="#f6e79a"/><stop offset="1" stop-color="#f3b8a0"/></linearGradient>
<radialGradient id="ln" cx="40%" cy="35%" r="70%"><stop offset="0" stop-color="#fff"/><stop offset="1" stop-color="#b9d4f4"/></radialGradient>
</defs>
<!-- new -->
<path d="M4.500 2.500h7l4 4v9h-11z" fill="url(#pg)" stroke="#7f93c4"/><path d="M11.500 2.500v4h4" fill="#e8f0fb" stroke="#7f93c4"/>
<path d="M4.2 1v6M1.2 4h6M2.1 1.9l4.2 4.2M6.3 1.9L2.1 6.1" stroke="#f08030" stroke-width="1.1"/>
<!-- open -->
<path d="M22.5 6.5h4l1.5 1.5h6v7h-11.5z" fill="#e8b838" stroke="#b8881c"/><path d="M24.5 9.5h11.5l-2.2 5.5h-11.3z" fill="url(#fo)" stroke="#c79a28"/>
<path d="M29.5 4.5c2-2 4.5-1.6 5.5 0.5" fill="none" stroke="#4a78c2" stroke-width="1.3"/><path d="M36.2 2.8v3.4h-3.4z" fill="#4a78c2"/>
<!-- save -->
<path d="M44.5 2.5h12l1 1v11.5h-13z" fill="#5050c0" stroke="#30308c"/><rect x="47" y="3" width="8" height="6" fill="#f4f6ff"/><rect x="47" y="11" width="7.5" height="4" fill="#20205c"/><rect x="50.5" y="12" width="2.2" height="2.4" fill="#e8e8f8"/>
<!-- print -->
<path d="M66.5 2.5h7.5l1 5h-9.5z" fill="#cfe6fb" stroke="#8fb4dc"/><path d="M64.5 8.5c0-1 1-1.5 2-1.5h9c1 0 2 .5 2 1.5v4.500c0 1-1 1.500-2 1.500h-9c-1 0-2-.5-2-1.500z" fill="#c8c8c8" stroke="#8a8a8a"/><rect x="66.500" y="12" width="8.500" height="3.500" fill="#efefef" stroke="#9a9a9a" stroke-width=".8"/><rect x="74" y="9.300" width="1.700" height="1.200" fill="#58c058"/>
<!-- arrow -->
<path d="M97.5 2.500v11.500l2.800-2.600 2 4.300 1.900-.9-2-4.200h3.700z" fill="#fff" stroke="#000" stroke-width="1.100" stroke-linejoin="round"/>
<!-- zoom in -->
<path d="M127 10l5.800 5" stroke="#e09840" stroke-width="2.600" stroke-linecap="round"/><circle cx="124" cy="6.800" r="4.600" fill="url(#ln)" stroke="#93a8d8" stroke-width="1.200"/><path d="M121.600 6.800h4.800M124 4.400v4.800" stroke="#3050b0" stroke-width="1.500"/>
<!-- zoom out -->
<path d="M147.800 10l5.800 5" stroke="#e09840" stroke-width="2.600" stroke-linecap="round"/><circle cx="144.800" cy="6.800" r="4.600" fill="url(#ln)" stroke="#93a8d8" stroke-width="1.200"/><path d="M142.400 6.800h4.800" stroke="#3050b0" stroke-width="1.500"/>
<!-- hand -->
<path d="M163.500 9.500l-2-1.800c-.8-.7-1.800.3-1.100 1.100l3.600 5.200c.5.800 1 1.500 1.500 2h6c.4-1.500 1.800-3 2-5l.3-5c.1-1.100-1.400-1.300-1.600-.2l-.4 2.200.1-4.500c0-1.100-1.500-1.200-1.600-.1l-.3 4 -.4-5c-.1-1.100-1.600-1-1.600.1l.1 4.900-.9-4.200c-.2-1.100-1.700-.8-1.600.3z" fill="#fbe3cf" stroke="#3058c0" stroke-width=".9" stroke-linejoin="round"/>
<!-- rotate (pressed) -->
<rect x="178.500" y=".5" width="19" height="18.500" rx="2.500" fill="#dadada" stroke="#6e6e6e"/>
<path d="M183.500 5.500a6 6 0 1 1-1.500 5.500" fill="none" stroke="#2a4a9c" stroke-width="1.700"/><path d="M180.600 3.200l4.700.6-1.800 4.200z" fill="#2a4a9c"/>
<path d="M186.500 8.200l2.500-1.300 2.500 1.300v3l-2.500 1.300-2.500-1.300z M186.500 8.200l2.500 1.200 2.500-1.200M189 9.400v3.100" fill="#eef2fb" stroke="#3a5ab0" stroke-width=".8"/>
<!-- data cursor -->
<rect x="206.500" y="1.500" width="9" height="9" fill="#f1e9a0" stroke="#a8a060"/><path d="M208.500 4h5M208.500 6h5M208.500 8h5" stroke="#c8c080" stroke-width=".8"/>
<path d="M201.500 4c1 5 4 9.500 13.500 11.500" fill="none" stroke="#2020e0" stroke-width="1" stroke-dasharray="2.500 1.500"/><path d="M202.500 11.500h7M206 8v7" stroke="#000" stroke-width="1.600"/>
<!-- brush -->
<path d="M230.500 9.500l6-7.500 1.500 1.200-6 7.500z" fill="#5f8fe0" stroke="#2a50b0" stroke-width=".8"/><path d="M223.500 15.500c0-3 1.500-5.500 4.500-6.500l2.500 2c-.5 3-3.500 4.500-7 4.500z" fill="#6a6a6a" stroke="#3a3a3a" stroke-width=".8"/><path d="M228.200 8.800l1.500-1.200 2.500 2-1.300 1.400z" fill="#d0d0d0" stroke="#707070" stroke-width=".6"/>
<rect x="232" y="11" width="5.500" height="4.500" fill="#000"/>
<path d="M243.700 8h5l-2.500 2.800z" fill="#303030"/>
<!-- link -->
<rect x="263.500" y="2.500" width="10" height="8" fill="#f4f8ff" stroke="#3a60b0" stroke-width="1.200"/><rect x="263.500" y="2.500" width="10" height="2" fill="#3a60b0"/>
<rect x="261.500" y="5.500" width="10" height="8" fill="#f4f8ff" stroke="#3a60b0" stroke-width="1.200"/><rect x="261.500" y="5.500" width="10" height="2" fill="#3a60b0"/>
<rect x="263" y="10.500" width="6" height="4" rx="2" fill="#dfe8f8" stroke="#5070b8" stroke-width="1.200"/><rect x="268.500" y="10.500" width="6.500" height="4" rx="2" fill="#dfe8f8" stroke="#5070b8" stroke-width="1.200"/><path d="M266.500 12.500h5.500" stroke="#5070b8" stroke-width="1.300"/>
<!-- colorbar -->
<rect x="291.500" y="2" width="8.500" height="13.500" rx="1" fill="url(#cb)" stroke="#3a58a8" stroke-width="1.200"/>
<!-- legend -->
<rect x="309.900" y="2.500" width="12.800" height="12.500" rx="1" fill="#fafcff" stroke="#3a58a8" stroke-width="1.200"/>
<rect x="311.500" y="4.500" width="4.200" height="3" fill="#f05858"/><rect x="311.500" y="10" width="4.200" height="3" fill="#5868f0"/><path d="M317.500 6h3.500M317.500 11.500h3.500" stroke="#202020" stroke-width="1.300"/>
<!-- gray square -->
<rect x="340.300" y="4.700" width="9.200" height="9" rx="1" fill="#989898" stroke="#a8a8a8" stroke-width=".8"/>
<!-- window -->
<rect x="358.700" y="3.400" width="12.500" height="11.400" fill="#fff" stroke="#30509c" stroke-width="1.400"/><rect x="358.700" y="3.400" width="12.500" height="1.600" fill="#30509c"/><path d="M360.800 5v9M369 5v9" stroke="#8098c8" stroke-width="1"/><path d="M359.400 13.200h11" stroke="#e8d890" stroke-width="1"/>
</svg>
<div class="sep" style="left:84px"></div><div class="sep" style="left:112px"></div><div class="sep" style="left:254px"></div><div class="sep" style="left:282px"></div><div class="sep" style="left:330px"></div>

<!-- Atom types -->
<div class="gb" style="left:21px;top:39px;width:111px;height:149px"></div>
<div class="t" style="left:47px;top:34px">Atom Types</div>
<div class="lbl" style="left:47px;top:55px;width:60px">Atom A</div>
<div class="dd" style="left:35px;top:70px">hydrogen<i></i></div>
<div class="lbl" style="left:47px;top:100px;width:60px">Atom B</div>
<div class="dd" style="left:33px;top:115px">hydrogen<i></i></div>
<div class="lbl" style="left:46px;top:146px;width:60px">Atom C</div>
<div class="dd" style="left:34px;top:158px">hydrogen<i></i></div>

<!-- Update -->
<div class="abs" style="left:143px;top:37px;width:93px;height:47px;border:1px solid #5a94c4;border-radius:3px;background:linear-gradient(#e1f2fc 0,#dcf0fc 48%,#bfe6fb 52%,#a9dbf6 100%);box-shadow:inset 0 0 0 1px #48d8fb55"></div>
<div class="abs" style="left:145px;top:39px;width:89px;height:43px;border:1px dotted #333;opacity:.85"></div>
<div class="lbl" style="left:143px;top:55px;width:93px;letter-spacing:-0.3px">Update</div>

<!-- Delta -->
<div class="gb" style="left:143px;top:96px;width:95px;height:36px"></div>
<div class="t" style="left:146.500px;top:92px">Delta Value</div>
<div class="ed" style="left:152px;top:104px;width:80px;height:21px;line-height:19px">0.424</div>

<!-- Calc type -->
<div class="abs" style="left:144px;top:138px;width:95px;height:51px;background:#fff"></div>
<div class="gb" style="left:144px;top:144px;width:94px;height:45px;box-shadow:none;border-color:#b9b9b9"></div>
<div class="t" style="left:148px;top:139px;background:#fff;letter-spacing:-0.25px">Calculation Type</div>
<div class="abs" style="left:153px;top:170px;width:59px;height:12px;background:#f0f0f0"></div>
<svg class="abs" style="left:152px;top:153px" width="16" height="32" viewBox="0 0 16 32">
<defs><radialGradient id="rb" cx="40%" cy="35%" r="65%"><stop offset="0" stop-color="#9fe0fb"/><stop offset="0.5" stop-color="#2a8fc9"/><stop offset="1" stop-color="#0b3c6d"/></radialGradient>
<linearGradient id="rg" x1="0" y1="0" x2="1" y2="1"><stop offset="0" stop-color="#c9c9c9"/><stop offset="1" stop-color="#fbfbfb"/></linearGradient></defs>
<circle cx="7.7" cy="7.8" r="5" fill="url(#rg)" stroke="#8e8f8f" stroke-width="1"/><circle cx="7.7" cy="7.8" r="2.7" fill="url(#rb)"/>
<circle cx="7.7" cy="23.9" r="5" fill="url(#rg)" stroke="#8e8f8f" stroke-width="1"/>
</svg>
<div class="lbl" style="left:169.5px;top:155px;text-align:left;letter-spacing:-0.3px">Dynamics</div>
<div class="lbl" style="left:169.5px;top:171px;text-align:left">MEP</div>

<!-- Steps -->
<div class="gb" style="left:22px;top:203px;width:109px;height:34px"></div>
<div class="t" style="left:26px;top:198px">Steps</div>
<div class="ed" style="left:36px;top:211px;width:81px;height:17px;line-height:15px">1000</div>

<!-- Cutoff -->
<div class="gb" style="left:143px;top:203px;width:97px;height:34px"></div>
<div class="t" style="left:147px;top:198px">Cutoff (Kcal/ mol)</div>
<div class="ed" style="left:157px;top:211px;width:74px;height:19px;line-height:17.500px">-20</div>

<!-- Collision angle -->
<div class="gb" style="left:20px;top:248px;width:222px;height:37px"></div>
<div class="t" style="left:24px;top:242px">Collision Angle</div>
<div class="abs" style="left:32px;top:255px;width:206px;height:18px;background:#e4e4e4;border-bottom:1px solid #6d6d6d;border-right:1px solid #6d6d6d"></div>
<div class="abs" style="left:32px;top:255px;width:14px;height:17px;background:#f0f0f0;border-right:1px solid #6d6d6d;border-top:1px solid #fff;border-left:1px solid #fff"></div>
<div class="abs" style="left:208px;top:255px;width:15px;height:17px;background:#f0f0f0;border-right:1px solid #6d6d6d;border-top:1px solid #fff"></div>
<div class="abs" style="left:223px;top:255px;width:14px;height:17px;background:#f0f0f0;border-top:1px solid #fff;border-left:1px solid #fff"></div>
<div class="abs" style="left:37px;top:260px;border:3px solid transparent;border-right:4px solid #333;border-left:0"></div>
<div class="abs" style="left:229px;top:260px;border:3px solid transparent;border-left:4px solid #333;border-right:0"></div>

<!-- Initial conditions -->
<div class="gb" style="left:20px;top:302px;width:223px;height:98px"></div>
<div class="t" style="left:94px;top:297.700px;letter-spacing:-0.3px">Initial Conditions</div>
<div class="lbl" style="left:30px;top:310px;width:91px;letter-spacing:0.05px">AB Distance (A)</div>
<div class="lbl" style="left:142.500px;top:310px;width:91px;letter-spacing:-0.35px">AB Momentum</div>
<div class="ed" style="left:30px;top:327px;width:91px;height:18px;line-height:16px">0.9071</div>
<div class="ed" style="left:141px;top:327px;width:91px;height:18px;line-height:16px">0</div>
<div class="lbl" style="left:29px;top:355px;width:91px;letter-spacing:0.05px">BC Distance (A)</div>
<div class="lbl" style="left:141.500px;top:355px;width:91px;letter-spacing:-0.35px">BC Momentum</div>
<div class="ed" style="left:29px;top:371px;width:91px;height:18px;line-height:16px">0.9171</div>
<div class="ed" style="left:141px;top:371px;width:91px;height:18px;line-height:16px">0</div>

<!-- Listbox -->
<div class="abs" style="left:20px;top:413px;width:221px;height:116px;background:#fff;border:1px solid #9c9c9c;box-shadow:inset 0 0 0 1px #d8d8d8"></div>
<div class="abs" style="left:21px;top:427px;width:204px;height:12px;background:#a6a6a6"></div>
<div class="abs" style="left:22px;top:415.8px;width:203px;height:98.5px;overflow:hidden;white-space:nowrap;line-height:12.56px">Contour Plot<br>Surface Plot<br>Internuclear Distances vs Time<br>Potential Energy vs Time<br>Kinetic Energy vs Time<br>Internuclear Velocities vs Internuclear Distance<br>Internuclear Accelerations vs Internuclear Distance<br>Internuclear Momenta vs Internuclear Distance</div>
<svg class="abs" style="left:0;top:0" width="260" height="558" viewBox="0 0 260 558">
<defs><linearGradient id="vth" x1="0" y1="0" x2="1" y2="0"><stop offset="0" stop-color="#f6f6f6"/><stop offset="0.5" stop-color="#e6e6e6"/><stop offset="1" stop-color="#cfcfcf"/></linearGradient>
<linearGradient id="hth" x1="0" y1="0" x2="0" y2="1"><stop offset="0" stop-color="#f6f6f6"/><stop offset="0.5" stop-color="#e6e6e6"/><stop offset="1" stop-color="#c9c9c9"/></linearGradient></defs>
<rect x="225" y="414" width="15" height="114" fill="#f0f0f0"/>
<rect x="21" y="514" width="219" height="14" fill="#efefef"/>
<path d="M229.5 424 L232.5 420.5 L235.5 424 Z" fill="#303030"/>
<path d="M229.5 503.5 L235.5 503.5 L232.5 507 Z" fill="#303030"/>
<rect x="226.5" y="430.5" width="12" height="42" rx="2" fill="url(#vth)" stroke="#979797"/>
<path d="M229.5 448.5h6M229.5 450.5h6M229.5 452.5h6M229.5 454.5h6" stroke="#5a5a5a" stroke-width="1" opacity=".8"/>
<path d="M29.5 517.5 L26 520.8 L29.5 524 Z" fill="#303030"/>
<path d="M215.5 517.5 L219 520.8 L215.5 524 Z" fill="#303030"/>
<rect x="37.5" y="515" width="154.5" height="12" rx="2" fill="url(#hth)" stroke="#979797"/>
<path d="M110.7 518v6M113.6 518v6M116.5 518v6" stroke="#5a5a5a" stroke-width="1.2" opacity=".85"/>
</svg>
<div class="abs" style="left:798px;top:0;width:2px;height:558px;background:linear-gradient(90deg,#dbe6f4 0,#b9d1ec 50%,#b3cdea)"></div>
<svg class="abs" style="left:784px;top:4px" width="14" height="14" viewBox="0 0 14 14"><path d="M3.5 4.500c2.500-1 4.500 0 5.200 2.300l1.800-1.300v4.500h-4.800l1.600-1.500c-.8-1.700-2-2.600-3.800-2.500z" fill="#111" stroke="#fff" stroke-width=".9"/></svg>
</body></html>
